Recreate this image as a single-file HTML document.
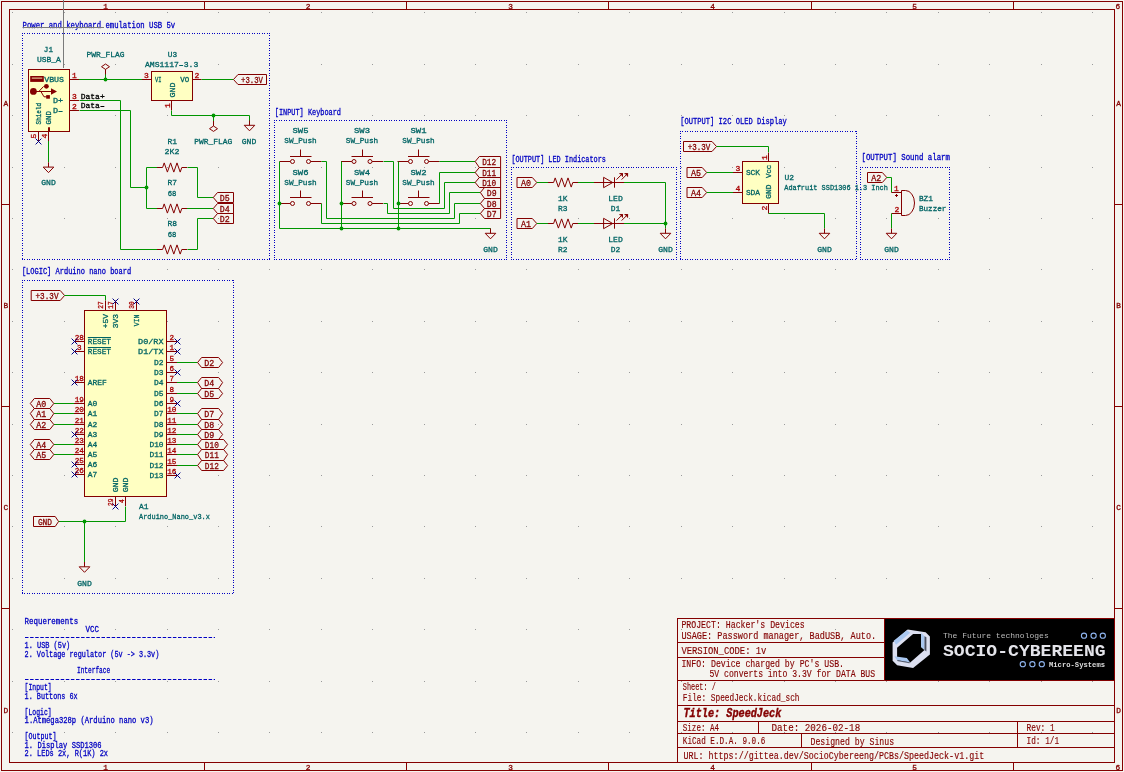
<!DOCTYPE html>
<html><head><meta charset="utf-8"><style>
html,body{margin:0;padding:0;background:#f5f4ef;}
svg{display:block;will-change:transform;}
text{font-family:"Liberation Mono", monospace;}
</style></head><body>
<svg width="1124" height="772" viewBox="0 0 1124 772">
<rect x="0" y="0" width="1124" height="772" fill="#f5f4ef"/>
<path d="M12,12h1v1h-1zM12,64h1v1h-1zM12,115h1v1h-1zM12,167h1v1h-1zM12,218h1v1h-1zM12,269h1v1h-1zM12,321h1v1h-1zM12,372h1v1h-1zM12,424h1v1h-1zM12,475h1v1h-1zM12,526h1v1h-1zM12,578h1v1h-1zM12,629h1v1h-1zM12,681h1v1h-1zM12,732h1v1h-1zM64,12h1v1h-1zM64,64h1v1h-1zM64,115h1v1h-1zM64,167h1v1h-1zM64,218h1v1h-1zM64,269h1v1h-1zM64,321h1v1h-1zM64,372h1v1h-1zM64,424h1v1h-1zM64,475h1v1h-1zM64,526h1v1h-1zM64,578h1v1h-1zM64,629h1v1h-1zM64,681h1v1h-1zM64,732h1v1h-1zM115,12h1v1h-1zM115,64h1v1h-1zM115,115h1v1h-1zM115,167h1v1h-1zM115,218h1v1h-1zM115,269h1v1h-1zM115,321h1v1h-1zM115,372h1v1h-1zM115,424h1v1h-1zM115,475h1v1h-1zM115,526h1v1h-1zM115,578h1v1h-1zM115,629h1v1h-1zM115,681h1v1h-1zM115,732h1v1h-1zM167,12h1v1h-1zM167,64h1v1h-1zM167,115h1v1h-1zM167,167h1v1h-1zM167,218h1v1h-1zM167,269h1v1h-1zM167,321h1v1h-1zM167,372h1v1h-1zM167,424h1v1h-1zM167,475h1v1h-1zM167,526h1v1h-1zM167,578h1v1h-1zM167,629h1v1h-1zM167,681h1v1h-1zM167,732h1v1h-1zM218,12h1v1h-1zM218,64h1v1h-1zM218,115h1v1h-1zM218,167h1v1h-1zM218,218h1v1h-1zM218,269h1v1h-1zM218,321h1v1h-1zM218,372h1v1h-1zM218,424h1v1h-1zM218,475h1v1h-1zM218,526h1v1h-1zM218,578h1v1h-1zM218,629h1v1h-1zM218,681h1v1h-1zM218,732h1v1h-1zM269,12h1v1h-1zM269,64h1v1h-1zM269,115h1v1h-1zM269,167h1v1h-1zM269,218h1v1h-1zM269,269h1v1h-1zM269,321h1v1h-1zM269,372h1v1h-1zM269,424h1v1h-1zM269,475h1v1h-1zM269,526h1v1h-1zM269,578h1v1h-1zM269,629h1v1h-1zM269,681h1v1h-1zM269,732h1v1h-1zM321,12h1v1h-1zM321,64h1v1h-1zM321,115h1v1h-1zM321,167h1v1h-1zM321,218h1v1h-1zM321,269h1v1h-1zM321,321h1v1h-1zM321,372h1v1h-1zM321,424h1v1h-1zM321,475h1v1h-1zM321,526h1v1h-1zM321,578h1v1h-1zM321,629h1v1h-1zM321,681h1v1h-1zM321,732h1v1h-1zM372,12h1v1h-1zM372,64h1v1h-1zM372,115h1v1h-1zM372,167h1v1h-1zM372,218h1v1h-1zM372,269h1v1h-1zM372,321h1v1h-1zM372,372h1v1h-1zM372,424h1v1h-1zM372,475h1v1h-1zM372,526h1v1h-1zM372,578h1v1h-1zM372,629h1v1h-1zM372,681h1v1h-1zM372,732h1v1h-1zM424,12h1v1h-1zM424,64h1v1h-1zM424,115h1v1h-1zM424,167h1v1h-1zM424,218h1v1h-1zM424,269h1v1h-1zM424,321h1v1h-1zM424,372h1v1h-1zM424,424h1v1h-1zM424,475h1v1h-1zM424,526h1v1h-1zM424,578h1v1h-1zM424,629h1v1h-1zM424,681h1v1h-1zM424,732h1v1h-1zM475,12h1v1h-1zM475,64h1v1h-1zM475,115h1v1h-1zM475,167h1v1h-1zM475,218h1v1h-1zM475,269h1v1h-1zM475,321h1v1h-1zM475,372h1v1h-1zM475,424h1v1h-1zM475,475h1v1h-1zM475,526h1v1h-1zM475,578h1v1h-1zM475,629h1v1h-1zM475,681h1v1h-1zM475,732h1v1h-1zM526,12h1v1h-1zM526,64h1v1h-1zM526,115h1v1h-1zM526,167h1v1h-1zM526,218h1v1h-1zM526,269h1v1h-1zM526,321h1v1h-1zM526,372h1v1h-1zM526,424h1v1h-1zM526,475h1v1h-1zM526,526h1v1h-1zM526,578h1v1h-1zM526,629h1v1h-1zM526,681h1v1h-1zM526,732h1v1h-1zM578,12h1v1h-1zM578,64h1v1h-1zM578,115h1v1h-1zM578,167h1v1h-1zM578,218h1v1h-1zM578,269h1v1h-1zM578,321h1v1h-1zM578,372h1v1h-1zM578,424h1v1h-1zM578,475h1v1h-1zM578,526h1v1h-1zM578,578h1v1h-1zM578,629h1v1h-1zM578,681h1v1h-1zM578,732h1v1h-1zM629,12h1v1h-1zM629,64h1v1h-1zM629,115h1v1h-1zM629,167h1v1h-1zM629,218h1v1h-1zM629,269h1v1h-1zM629,321h1v1h-1zM629,372h1v1h-1zM629,424h1v1h-1zM629,475h1v1h-1zM629,526h1v1h-1zM629,578h1v1h-1zM629,629h1v1h-1zM629,681h1v1h-1zM629,732h1v1h-1zM681,12h1v1h-1zM681,64h1v1h-1zM681,115h1v1h-1zM681,167h1v1h-1zM681,218h1v1h-1zM681,269h1v1h-1zM681,321h1v1h-1zM681,372h1v1h-1zM681,424h1v1h-1zM681,475h1v1h-1zM681,526h1v1h-1zM681,578h1v1h-1zM681,629h1v1h-1zM681,681h1v1h-1zM681,732h1v1h-1zM732,12h1v1h-1zM732,64h1v1h-1zM732,115h1v1h-1zM732,167h1v1h-1zM732,218h1v1h-1zM732,269h1v1h-1zM732,321h1v1h-1zM732,372h1v1h-1zM732,424h1v1h-1zM732,475h1v1h-1zM732,526h1v1h-1zM732,578h1v1h-1zM732,629h1v1h-1zM732,681h1v1h-1zM732,732h1v1h-1zM784,12h1v1h-1zM784,64h1v1h-1zM784,115h1v1h-1zM784,167h1v1h-1zM784,218h1v1h-1zM784,269h1v1h-1zM784,321h1v1h-1zM784,372h1v1h-1zM784,424h1v1h-1zM784,475h1v1h-1zM784,526h1v1h-1zM784,578h1v1h-1zM784,629h1v1h-1zM784,681h1v1h-1zM784,732h1v1h-1zM835,12h1v1h-1zM835,64h1v1h-1zM835,115h1v1h-1zM835,167h1v1h-1zM835,218h1v1h-1zM835,269h1v1h-1zM835,321h1v1h-1zM835,372h1v1h-1zM835,424h1v1h-1zM835,475h1v1h-1zM835,526h1v1h-1zM835,578h1v1h-1zM835,629h1v1h-1zM835,681h1v1h-1zM835,732h1v1h-1zM886,12h1v1h-1zM886,64h1v1h-1zM886,115h1v1h-1zM886,167h1v1h-1zM886,218h1v1h-1zM886,269h1v1h-1zM886,321h1v1h-1zM886,372h1v1h-1zM886,424h1v1h-1zM886,475h1v1h-1zM886,526h1v1h-1zM886,578h1v1h-1zM886,629h1v1h-1zM886,681h1v1h-1zM886,732h1v1h-1zM938,12h1v1h-1zM938,64h1v1h-1zM938,115h1v1h-1zM938,167h1v1h-1zM938,218h1v1h-1zM938,269h1v1h-1zM938,321h1v1h-1zM938,372h1v1h-1zM938,424h1v1h-1zM938,475h1v1h-1zM938,526h1v1h-1zM938,578h1v1h-1zM938,629h1v1h-1zM938,681h1v1h-1zM938,732h1v1h-1zM989,12h1v1h-1zM989,64h1v1h-1zM989,115h1v1h-1zM989,167h1v1h-1zM989,218h1v1h-1zM989,269h1v1h-1zM989,321h1v1h-1zM989,372h1v1h-1zM989,424h1v1h-1zM989,475h1v1h-1zM989,526h1v1h-1zM989,578h1v1h-1zM989,629h1v1h-1zM989,681h1v1h-1zM989,732h1v1h-1zM1041,12h1v1h-1zM1041,64h1v1h-1zM1041,115h1v1h-1zM1041,167h1v1h-1zM1041,218h1v1h-1zM1041,269h1v1h-1zM1041,321h1v1h-1zM1041,372h1v1h-1zM1041,424h1v1h-1zM1041,475h1v1h-1zM1041,526h1v1h-1zM1041,578h1v1h-1zM1041,629h1v1h-1zM1041,681h1v1h-1zM1041,732h1v1h-1zM1092,12h1v1h-1zM1092,64h1v1h-1zM1092,115h1v1h-1zM1092,167h1v1h-1zM1092,218h1v1h-1zM1092,269h1v1h-1zM1092,321h1v1h-1zM1092,372h1v1h-1zM1092,424h1v1h-1zM1092,475h1v1h-1zM1092,526h1v1h-1zM1092,578h1v1h-1zM1092,629h1v1h-1zM1092,681h1v1h-1zM1092,732h1v1h-1z" fill="#9a9a9a"/>
<rect x="1.5" y="1.5" width="1121" height="769" fill="none" stroke="#840000" stroke-width="1"/>
<rect x="9.5" y="9.5" width="1105" height="753" fill="none" stroke="#840000" stroke-width="1"/>
<line x1="204.50" y1="1.50" x2="204.50" y2="9.50" stroke="#840000" stroke-width="1" />
<line x1="204.50" y1="762.50" x2="204.50" y2="770.50" stroke="#840000" stroke-width="1" />
<line x1="406.50" y1="1.50" x2="406.50" y2="9.50" stroke="#840000" stroke-width="1" />
<line x1="406.50" y1="762.50" x2="406.50" y2="770.50" stroke="#840000" stroke-width="1" />
<line x1="608.50" y1="1.50" x2="608.50" y2="9.50" stroke="#840000" stroke-width="1" />
<line x1="608.50" y1="762.50" x2="608.50" y2="770.50" stroke="#840000" stroke-width="1" />
<line x1="811.50" y1="1.50" x2="811.50" y2="9.50" stroke="#840000" stroke-width="1" />
<line x1="811.50" y1="762.50" x2="811.50" y2="770.50" stroke="#840000" stroke-width="1" />
<line x1="1013.50" y1="1.50" x2="1013.50" y2="9.50" stroke="#840000" stroke-width="1" />
<line x1="1013.50" y1="762.50" x2="1013.50" y2="770.50" stroke="#840000" stroke-width="1" />
<line x1="1.50" y1="204.50" x2="9.50" y2="204.50" stroke="#840000" stroke-width="1" />
<line x1="1114.50" y1="204.50" x2="1122.50" y2="204.50" stroke="#840000" stroke-width="1" />
<line x1="1.50" y1="406.50" x2="9.50" y2="406.50" stroke="#840000" stroke-width="1" />
<line x1="1114.50" y1="406.50" x2="1122.50" y2="406.50" stroke="#840000" stroke-width="1" />
<line x1="1.50" y1="608.50" x2="9.50" y2="608.50" stroke="#840000" stroke-width="1" />
<line x1="1114.50" y1="608.50" x2="1122.50" y2="608.50" stroke="#840000" stroke-width="1" />
<text x="105.50" y="8.80" fill="#840000" font-size="7.8" text-anchor="middle" font-weight="normal" font-style="normal" font-family='"Liberation Mono", monospace' stroke="#840000" stroke-width="0.3" >1</text>
<text x="105.50" y="769.80" fill="#840000" font-size="7.8" text-anchor="middle" font-weight="normal" font-style="normal" font-family='"Liberation Mono", monospace' stroke="#840000" stroke-width="0.3" >1</text>
<text x="308.00" y="8.80" fill="#840000" font-size="7.8" text-anchor="middle" font-weight="normal" font-style="normal" font-family='"Liberation Mono", monospace' stroke="#840000" stroke-width="0.3" >2</text>
<text x="308.00" y="769.80" fill="#840000" font-size="7.8" text-anchor="middle" font-weight="normal" font-style="normal" font-family='"Liberation Mono", monospace' stroke="#840000" stroke-width="0.3" >2</text>
<text x="510.50" y="8.80" fill="#840000" font-size="7.8" text-anchor="middle" font-weight="normal" font-style="normal" font-family='"Liberation Mono", monospace' stroke="#840000" stroke-width="0.3" >3</text>
<text x="510.50" y="769.80" fill="#840000" font-size="7.8" text-anchor="middle" font-weight="normal" font-style="normal" font-family='"Liberation Mono", monospace' stroke="#840000" stroke-width="0.3" >3</text>
<text x="712.50" y="8.80" fill="#840000" font-size="7.8" text-anchor="middle" font-weight="normal" font-style="normal" font-family='"Liberation Mono", monospace' stroke="#840000" stroke-width="0.3" >4</text>
<text x="712.50" y="769.80" fill="#840000" font-size="7.8" text-anchor="middle" font-weight="normal" font-style="normal" font-family='"Liberation Mono", monospace' stroke="#840000" stroke-width="0.3" >4</text>
<text x="914.70" y="8.80" fill="#840000" font-size="7.8" text-anchor="middle" font-weight="normal" font-style="normal" font-family='"Liberation Mono", monospace' stroke="#840000" stroke-width="0.3" >5</text>
<text x="914.70" y="769.80" fill="#840000" font-size="7.8" text-anchor="middle" font-weight="normal" font-style="normal" font-family='"Liberation Mono", monospace' stroke="#840000" stroke-width="0.3" >5</text>
<text x="1117.90" y="8.80" fill="#840000" font-size="7.8" text-anchor="middle" font-weight="normal" font-style="normal" font-family='"Liberation Mono", monospace' stroke="#840000" stroke-width="0.3" >6</text>
<text x="1117.90" y="769.80" fill="#840000" font-size="7.8" text-anchor="middle" font-weight="normal" font-style="normal" font-family='"Liberation Mono", monospace' stroke="#840000" stroke-width="0.3" >6</text>
<text x="5.80" y="105.70" fill="#840000" font-size="7.8" text-anchor="middle" font-weight="normal" font-style="normal" font-family='"Liberation Mono", monospace' stroke="#840000" stroke-width="0.3" >A</text>
<text x="1118.50" y="105.70" fill="#840000" font-size="7.8" text-anchor="middle" font-weight="normal" font-style="normal" font-family='"Liberation Mono", monospace' stroke="#840000" stroke-width="0.3" >A</text>
<text x="5.80" y="307.90" fill="#840000" font-size="7.8" text-anchor="middle" font-weight="normal" font-style="normal" font-family='"Liberation Mono", monospace' stroke="#840000" stroke-width="0.3" >B</text>
<text x="1118.50" y="307.90" fill="#840000" font-size="7.8" text-anchor="middle" font-weight="normal" font-style="normal" font-family='"Liberation Mono", monospace' stroke="#840000" stroke-width="0.3" >B</text>
<text x="5.80" y="510.40" fill="#840000" font-size="7.8" text-anchor="middle" font-weight="normal" font-style="normal" font-family='"Liberation Mono", monospace' stroke="#840000" stroke-width="0.3" >C</text>
<text x="1118.50" y="510.40" fill="#840000" font-size="7.8" text-anchor="middle" font-weight="normal" font-style="normal" font-family='"Liberation Mono", monospace' stroke="#840000" stroke-width="0.3" >C</text>
<text x="5.80" y="712.80" fill="#840000" font-size="7.8" text-anchor="middle" font-weight="normal" font-style="normal" font-family='"Liberation Mono", monospace' stroke="#840000" stroke-width="0.3" >D</text>
<text x="1118.50" y="712.80" fill="#840000" font-size="7.8" text-anchor="middle" font-weight="normal" font-style="normal" font-family='"Liberation Mono", monospace' stroke="#840000" stroke-width="0.3" >D</text>
<text x="22.60" y="27.90" fill="#0000c2" font-size="8.8" text-anchor="start" font-weight="normal" font-style="normal" font-family='"Liberation Mono", monospace' textLength="152.60" lengthAdjust="spacingAndGlyphs" stroke="#0000c2" stroke-width="0.3" >Power and keyboard emulation USB 5v</text>
<path d="M22,33.5H270M22,259.5H270M22.5,33V260M269.5,33V260" fill="none" stroke="#0000c2" stroke-width="1" stroke-dasharray="1 1 1 2"/>
<text x="48.40" y="51.70" fill="#006464" font-size="8.0" text-anchor="middle" font-weight="normal" font-style="normal" font-family='"Liberation Mono", monospace' textLength="9.10" lengthAdjust="spacingAndGlyphs" stroke="#006464" stroke-width="0.3" >J1</text>
<text x="48.90" y="62.00" fill="#006464" font-size="8.0" text-anchor="middle" font-weight="normal" font-style="normal" font-family='"Liberation Mono", monospace' textLength="24.00" lengthAdjust="spacingAndGlyphs" stroke="#006464" stroke-width="0.3" >USB_A</text>
<rect x="28.5" y="69.5" width="41" height="62" fill="#ffffc2" stroke="#840000" stroke-width="1"/>
<rect x="30.2" y="76" width="13.6" height="5.9" fill="#840000"/>
<line x1="31.8" y1="78.1" x2="42.3" y2="78.1" stroke="#ffffc2" stroke-width="0.9"/>
<circle cx="33.4" cy="91.4" r="3.4" fill="#840000"/>
<path d="M33.4,91.5H52M38.8,91.5L43.6,86.4M40.9,91.5L44,96.8H47" stroke="#840000" stroke-width="1" fill="none"/>
<polygon points="51,88.2 57,91.5 51,94.8" fill="#840000"/>
<circle cx="46.4" cy="86.3" r="2.4" fill="#840000"/>
<rect x="46.2" y="95.1" width="3.7" height="3.6" fill="#840000"/>
<line x1="49" y1="127.3" x2="49" y2="131.5" stroke="#840000" stroke-width="2"/>
<text x="64.00" y="81.70" fill="#006464" font-size="8.0" text-anchor="end" font-weight="normal" font-style="normal" font-family='"Liberation Mono", monospace' textLength="19.80" lengthAdjust="spacingAndGlyphs" stroke="#006464" stroke-width="0.3" >VBUS</text>
<text x="63.00" y="102.70" fill="#006464" font-size="8.0" text-anchor="end" font-weight="normal" font-style="normal" font-family='"Liberation Mono", monospace' textLength="10.10" lengthAdjust="spacingAndGlyphs" stroke="#006464" stroke-width="0.3" >D+</text>
<text x="63.00" y="112.60" fill="#006464" font-size="8.0" text-anchor="end" font-weight="normal" font-style="normal" font-family='"Liberation Mono", monospace' textLength="10.10" lengthAdjust="spacingAndGlyphs" stroke="#006464" stroke-width="0.3" >D–</text>
<text x="40.90" y="124.40" fill="#006464" font-size="8.0" text-anchor="start" font-weight="normal" font-style="normal" font-family='"Liberation Mono", monospace' textLength="21.50" lengthAdjust="spacingAndGlyphs" transform="rotate(-90 40.90 124.40)" stroke="#006464" stroke-width="0.3" >Shield</text>
<text x="51.00" y="124.40" fill="#006464" font-size="8.0" text-anchor="start" font-weight="normal" font-style="normal" font-family='"Liberation Mono", monospace' textLength="13.50" lengthAdjust="spacingAndGlyphs" transform="rotate(-90 51.00 124.40)" stroke="#006464" stroke-width="0.3" >GND</text>
<line x1="69.50" y1="79.50" x2="79.00" y2="79.50" stroke="#840000" stroke-width="1" />
<text x="74.50" y="77.50" fill="#a90000" font-size="8.0" text-anchor="middle" font-weight="normal" font-style="normal" font-family='"Liberation Mono", monospace' stroke="#a90000" stroke-width="0.3" >1</text>
<line x1="69.50" y1="100.50" x2="79.00" y2="100.50" stroke="#840000" stroke-width="1" />
<text x="74.50" y="98.50" fill="#a90000" font-size="8.0" text-anchor="middle" font-weight="normal" font-style="normal" font-family='"Liberation Mono", monospace' stroke="#a90000" stroke-width="0.3" >3</text>
<line x1="69.50" y1="110.50" x2="79.00" y2="110.50" stroke="#840000" stroke-width="1" />
<text x="74.50" y="108.50" fill="#a90000" font-size="8.0" text-anchor="middle" font-weight="normal" font-style="normal" font-family='"Liberation Mono", monospace' stroke="#a90000" stroke-width="0.3" >2</text>
<line x1="38.50" y1="131.50" x2="38.50" y2="141.00" stroke="#840000" stroke-width="1" />
<text x="36.30" y="136.20" fill="#a90000" font-size="8.0" text-anchor="middle" font-weight="normal" font-style="normal" font-family='"Liberation Mono", monospace' transform="rotate(-90 36.30 136.20)" stroke="#a90000" stroke-width="0.3" >5</text>
<path d="M35.60,138.60L41.40,144.40M41.40,138.60L35.60,144.40" stroke="#000084" stroke-width="1" fill="none"/>
<line x1="48.50" y1="131.50" x2="48.50" y2="141.00" stroke="#840000" stroke-width="1" />
<text x="46.50" y="136.00" fill="#a90000" font-size="8.0" text-anchor="middle" font-weight="normal" font-style="normal" font-family='"Liberation Mono", monospace' transform="rotate(-90 46.50 136.00)" stroke="#a90000" stroke-width="0.3" >4</text>
<line x1="48.50" y1="141.00" x2="48.50" y2="162.30" stroke="#009600" stroke-width="1" />
<path d="M48.5,162.30V167.10M43.20,167.10H53.80L48.5,172.60Z" stroke="#840000" stroke-width="1" fill="none" stroke-linejoin="miter"/>
<text x="48.50" y="184.70" fill="#006464" font-size="8.0" text-anchor="middle" font-weight="normal" font-style="normal" font-family='"Liberation Mono", monospace' textLength="14.50" lengthAdjust="spacingAndGlyphs" stroke="#006464" stroke-width="0.3" >GND</text>
<text x="80.70" y="98.70" fill="#000000" font-size="8.0" text-anchor="start" font-weight="normal" font-style="normal" font-family='"Liberation Mono", monospace' textLength="24.00" lengthAdjust="spacingAndGlyphs" stroke="#000000" stroke-width="0.3" >Data+</text>
<text x="80.70" y="108.30" fill="#000000" font-size="8.0" text-anchor="start" font-weight="normal" font-style="normal" font-family='"Liberation Mono", monospace' textLength="24.00" lengthAdjust="spacingAndGlyphs" stroke="#000000" stroke-width="0.3" >Data–</text>
<line x1="79.00" y1="79.50" x2="142.00" y2="79.50" stroke="#009600" stroke-width="1" />
<line x1="105.50" y1="69.40" x2="105.50" y2="79.50" stroke="#009600" stroke-width="1" />
<circle cx="105.50" cy="79.50" r="1.9" fill="#009600"/>
<path d="M105.5,74.40V69.40M105.5,69.40L101.50,66.70L105.5,64.00L109.50,66.70Z" stroke="#840000" stroke-width="1" fill="none" stroke-linejoin="miter"/>
<text x="105.50" y="56.50" fill="#006464" font-size="8.0" text-anchor="middle" font-weight="normal" font-style="normal" font-family='"Liberation Mono", monospace' textLength="37.90" lengthAdjust="spacingAndGlyphs" stroke="#006464" stroke-width="0.3" >PWR_FLAG</text>
<text x="172.40" y="56.80" fill="#006464" font-size="8.0" text-anchor="middle" font-weight="normal" font-style="normal" font-family='"Liberation Mono", monospace' textLength="9.30" lengthAdjust="spacingAndGlyphs" stroke="#006464" stroke-width="0.3" >U3</text>
<text x="171.60" y="67.00" fill="#006464" font-size="8.0" text-anchor="middle" font-weight="normal" font-style="normal" font-family='"Liberation Mono", monospace' textLength="53.30" lengthAdjust="spacingAndGlyphs" stroke="#006464" stroke-width="0.3" >AMS1117–3.3</text>
<rect x="151.5" y="71.5" width="41" height="29" fill="#ffffc2" stroke="#840000" stroke-width="1"/>
<line x1="142.00" y1="79.50" x2="151.50" y2="79.50" stroke="#840000" stroke-width="1" />
<text x="146.50" y="77.50" fill="#a90000" font-size="8.0" text-anchor="middle" font-weight="normal" font-style="normal" font-family='"Liberation Mono", monospace' stroke="#a90000" stroke-width="0.3" >3</text>
<line x1="192.50" y1="79.50" x2="201.60" y2="79.50" stroke="#840000" stroke-width="1" />
<text x="197.00" y="77.50" fill="#a90000" font-size="8.0" text-anchor="middle" font-weight="normal" font-style="normal" font-family='"Liberation Mono", monospace' stroke="#a90000" stroke-width="0.3" >2</text>
<text x="155.00" y="81.70" fill="#006464" font-size="8.0" text-anchor="start" font-weight="normal" font-style="normal" font-family='"Liberation Mono", monospace' textLength="6.50" lengthAdjust="spacingAndGlyphs" stroke="#006464" stroke-width="0.3" >VI</text>
<text x="189.30" y="81.70" fill="#006464" font-size="8.0" text-anchor="end" font-weight="normal" font-style="normal" font-family='"Liberation Mono", monospace' textLength="9.00" lengthAdjust="spacingAndGlyphs" stroke="#006464" stroke-width="0.3" >VO</text>
<text x="174.50" y="97.50" fill="#006464" font-size="8.0" text-anchor="start" font-weight="normal" font-style="normal" font-family='"Liberation Mono", monospace' textLength="15.00" lengthAdjust="spacingAndGlyphs" transform="rotate(-90 174.50 97.50)" stroke="#006464" stroke-width="0.3" >GND</text>
<line x1="171.50" y1="100.50" x2="171.50" y2="110.40" stroke="#840000" stroke-width="1" />
<text x="169.50" y="105.50" fill="#a90000" font-size="8.0" text-anchor="middle" font-weight="normal" font-style="normal" font-family='"Liberation Mono", monospace' transform="rotate(-90 169.50 105.50)" stroke="#a90000" stroke-width="0.3" >1</text>
<line x1="201.60" y1="79.50" x2="233.40" y2="79.50" stroke="#009600" stroke-width="1" />
<polygon points="233.5,79.5 238,74.5 266.5,74.5 266.5,84.5 238,84.5" stroke="#840000" stroke-width="1" fill="none"/>
<text x="252.00" y="82.80" fill="#840000" font-size="9" text-anchor="middle" font-weight="normal" font-style="normal" font-family='"Liberation Mono", monospace' textLength="21.80" lengthAdjust="spacingAndGlyphs" stroke="#840000" stroke-width="0.3" >+3.3V</text>
<polyline points="171.50,110.50 171.50,115.50 249.50,115.50" stroke="#009600" stroke-width="1" fill="none" stroke-linejoin="miter" />
<circle cx="213.50" cy="115.50" r="1.9" fill="#009600"/>
<line x1="213.50" y1="115.50" x2="213.50" y2="121.00" stroke="#009600" stroke-width="1" />
<path d="M213.5,121.00V126.00M213.5,126.00L209.50,128.70L213.5,131.40L217.50,128.70Z" stroke="#840000" stroke-width="1" fill="none" stroke-linejoin="miter"/>
<line x1="249.50" y1="115.50" x2="249.50" y2="121.00" stroke="#009600" stroke-width="1" />
<path d="M249.5,120.50V125.30M244.20,125.30H254.80L249.5,130.80Z" stroke="#840000" stroke-width="1" fill="none" stroke-linejoin="miter"/>
<text x="213.30" y="144.00" fill="#006464" font-size="8.0" text-anchor="middle" font-weight="normal" font-style="normal" font-family='"Liberation Mono", monospace' textLength="37.90" lengthAdjust="spacingAndGlyphs" stroke="#006464" stroke-width="0.3" >PWR_FLAG</text>
<text x="249.00" y="144.00" fill="#006464" font-size="8.0" text-anchor="middle" font-weight="normal" font-style="normal" font-family='"Liberation Mono", monospace' textLength="14.50" lengthAdjust="spacingAndGlyphs" stroke="#006464" stroke-width="0.3" >GND</text>
<polyline points="79.50,100.50 120.50,100.50 120.50,249.50 157.50,249.50" stroke="#009600" stroke-width="1" fill="none" stroke-linejoin="miter" />
<polyline points="79.50,110.50 130.50,110.50 130.50,187.50 146.50,187.50" stroke="#009600" stroke-width="1" fill="none" stroke-linejoin="miter" />
<polyline points="157.50,167.50 146.50,167.50 146.50,208.50 157.50,208.50" stroke="#009600" stroke-width="1" fill="none" stroke-linejoin="miter" />
<circle cx="146.50" cy="187.50" r="1.9" fill="#009600"/>
<polyline points="157.00,167.50 162.60,167.50 164.20,162.90 167.40,172.10 170.60,162.90 173.80,172.10 177.00,162.90 180.20,172.10 181.80,167.50 187.20,167.50" stroke="#840000" stroke-width="1" fill="none" stroke-linejoin="miter"/>
<polyline points="157.00,208.50 162.60,208.50 164.20,203.90 167.40,213.10 170.60,203.90 173.80,213.10 177.00,203.90 180.20,213.10 181.80,208.50 187.20,208.50" stroke="#840000" stroke-width="1" fill="none" stroke-linejoin="miter"/>
<polyline points="157.00,249.50 162.60,249.50 164.20,244.90 167.40,254.10 170.60,244.90 173.80,254.10 177.00,244.90 180.20,254.10 181.80,249.50 187.20,249.50" stroke="#840000" stroke-width="1" fill="none" stroke-linejoin="miter"/>
<polyline points="187.50,167.50 197.50,167.50 197.50,197.50 213.50,197.50" stroke="#009600" stroke-width="1" fill="none" stroke-linejoin="miter" />
<line x1="187.00" y1="208.50" x2="213.30" y2="208.50" stroke="#009600" stroke-width="1" />
<polyline points="187.50,249.50 197.50,249.50 197.50,218.50 213.50,218.50" stroke="#009600" stroke-width="1" fill="none" stroke-linejoin="miter" />
<text x="172.20" y="144.00" fill="#006464" font-size="8.0" text-anchor="middle" font-weight="normal" font-style="normal" font-family='"Liberation Mono", monospace' textLength="9.50" lengthAdjust="spacingAndGlyphs" stroke="#006464" stroke-width="0.3" >R1</text>
<text x="172.00" y="154.00" fill="#006464" font-size="8.0" text-anchor="middle" font-weight="normal" font-style="normal" font-family='"Liberation Mono", monospace' textLength="14.80" lengthAdjust="spacingAndGlyphs" stroke="#006464" stroke-width="0.3" >2K2</text>
<text x="172.20" y="185.00" fill="#006464" font-size="8.0" text-anchor="middle" font-weight="normal" font-style="normal" font-family='"Liberation Mono", monospace' textLength="9.50" lengthAdjust="spacingAndGlyphs" stroke="#006464" stroke-width="0.3" >R7</text>
<text x="172.00" y="195.70" fill="#006464" font-size="8.0" text-anchor="middle" font-weight="normal" font-style="normal" font-family='"Liberation Mono", monospace' textLength="8.70" lengthAdjust="spacingAndGlyphs" stroke="#006464" stroke-width="0.3" >68</text>
<text x="172.20" y="225.70" fill="#006464" font-size="8.0" text-anchor="middle" font-weight="normal" font-style="normal" font-family='"Liberation Mono", monospace' textLength="9.50" lengthAdjust="spacingAndGlyphs" stroke="#006464" stroke-width="0.3" >R8</text>
<text x="172.00" y="236.60" fill="#006464" font-size="8.0" text-anchor="middle" font-weight="normal" font-style="normal" font-family='"Liberation Mono", monospace' textLength="8.70" lengthAdjust="spacingAndGlyphs" stroke="#006464" stroke-width="0.3" >68</text>
<polygon points="213.30,197.5 217.50,192.50 233.50,192.50 233.50,202.50 217.50,202.50" stroke="#840000" stroke-width="1" fill="none"/>
<text x="224.70" y="200.70" fill="#840000" font-size="9" text-anchor="middle" font-weight="normal" font-style="normal" font-family='"Liberation Mono", monospace' textLength="10.00" lengthAdjust="spacingAndGlyphs" stroke="#840000" stroke-width="0.3" >D5</text>
<polygon points="213.30,208.5 217.50,203.50 233.50,203.50 233.50,213.50 217.50,213.50" stroke="#840000" stroke-width="1" fill="none"/>
<text x="224.70" y="211.70" fill="#840000" font-size="9" text-anchor="middle" font-weight="normal" font-style="normal" font-family='"Liberation Mono", monospace' textLength="10.00" lengthAdjust="spacingAndGlyphs" stroke="#840000" stroke-width="0.3" >D4</text>
<polygon points="213.30,218.5 217.50,213.50 233.50,213.50 233.50,223.50 217.50,223.50" stroke="#840000" stroke-width="1" fill="none"/>
<text x="224.70" y="221.70" fill="#840000" font-size="9" text-anchor="middle" font-weight="normal" font-style="normal" font-family='"Liberation Mono", monospace' textLength="10.00" lengthAdjust="spacingAndGlyphs" stroke="#840000" stroke-width="0.3" >D2</text>
<path d="M63.5,0V68M22.6,27.5H104" stroke="#7a7a7a" stroke-width="1" fill="none"/>
<text x="274.80" y="114.90" fill="#0000c2" font-size="8.8" text-anchor="start" font-weight="normal" font-style="normal" font-family='"Liberation Mono", monospace' textLength="66.20" lengthAdjust="spacingAndGlyphs" stroke="#0000c2" stroke-width="0.3" >[INPUT] Keyboard</text>
<path d="M274,120.5H507M274,259.5H507M274.5,120V260M506.5,120V260" fill="none" stroke="#0000c2" stroke-width="1" stroke-dasharray="1 1 1 2"/>
<path d="M279.50,161.5H290.40M310.60,161.5H321.50M290.00,156.50H311.50M300.50,156.50V149.50" stroke="#840000" stroke-width="1" fill="none"/>
<circle cx="292.50" cy="161.5" r="2.0" stroke="#840000" stroke-width="1" fill="none"/>
<circle cx="308.50" cy="161.5" r="2.0" stroke="#840000" stroke-width="1" fill="none"/>
<text x="300.50" y="132.90" fill="#006464" font-size="8.0" text-anchor="middle" font-weight="normal" font-style="normal" font-family='"Liberation Mono", monospace' textLength="16.00" lengthAdjust="spacingAndGlyphs" stroke="#006464" stroke-width="0.3" >SW5</text>
<text x="300.50" y="142.90" fill="#006464" font-size="8.0" text-anchor="middle" font-weight="normal" font-style="normal" font-family='"Liberation Mono", monospace' textLength="32.50" lengthAdjust="spacingAndGlyphs" stroke="#006464" stroke-width="0.3" >SW_Push</text>
<path d="M341.00,161.5H351.90M372.10,161.5H383.00M351.50,156.50H373.00M362.50,156.50V149.50" stroke="#840000" stroke-width="1" fill="none"/>
<circle cx="354.00" cy="161.5" r="2.0" stroke="#840000" stroke-width="1" fill="none"/>
<circle cx="370.00" cy="161.5" r="2.0" stroke="#840000" stroke-width="1" fill="none"/>
<text x="362.00" y="132.90" fill="#006464" font-size="8.0" text-anchor="middle" font-weight="normal" font-style="normal" font-family='"Liberation Mono", monospace' textLength="16.00" lengthAdjust="spacingAndGlyphs" stroke="#006464" stroke-width="0.3" >SW3</text>
<text x="362.00" y="142.90" fill="#006464" font-size="8.0" text-anchor="middle" font-weight="normal" font-style="normal" font-family='"Liberation Mono", monospace' textLength="32.50" lengthAdjust="spacingAndGlyphs" stroke="#006464" stroke-width="0.3" >SW_Push</text>
<path d="M397.50,161.5H408.40M428.60,161.5H439.50M408.00,156.50H429.50M418.50,156.50V149.50" stroke="#840000" stroke-width="1" fill="none"/>
<circle cx="410.50" cy="161.5" r="2.0" stroke="#840000" stroke-width="1" fill="none"/>
<circle cx="426.50" cy="161.5" r="2.0" stroke="#840000" stroke-width="1" fill="none"/>
<text x="418.50" y="132.90" fill="#006464" font-size="8.0" text-anchor="middle" font-weight="normal" font-style="normal" font-family='"Liberation Mono", monospace' textLength="16.00" lengthAdjust="spacingAndGlyphs" stroke="#006464" stroke-width="0.3" >SW1</text>
<text x="418.50" y="142.90" fill="#006464" font-size="8.0" text-anchor="middle" font-weight="normal" font-style="normal" font-family='"Liberation Mono", monospace' textLength="32.50" lengthAdjust="spacingAndGlyphs" stroke="#006464" stroke-width="0.3" >SW_Push</text>
<path d="M279.50,203.5H290.40M310.60,203.5H321.50M290.00,197.50H311.50M300.50,197.50V190.50" stroke="#840000" stroke-width="1" fill="none"/>
<circle cx="292.50" cy="203.5" r="2.0" stroke="#840000" stroke-width="1" fill="none"/>
<circle cx="308.50" cy="203.5" r="2.0" stroke="#840000" stroke-width="1" fill="none"/>
<text x="300.50" y="174.90" fill="#006464" font-size="8.0" text-anchor="middle" font-weight="normal" font-style="normal" font-family='"Liberation Mono", monospace' textLength="16.00" lengthAdjust="spacingAndGlyphs" stroke="#006464" stroke-width="0.3" >SW6</text>
<text x="300.50" y="184.90" fill="#006464" font-size="8.0" text-anchor="middle" font-weight="normal" font-style="normal" font-family='"Liberation Mono", monospace' textLength="32.50" lengthAdjust="spacingAndGlyphs" stroke="#006464" stroke-width="0.3" >SW_Push</text>
<path d="M341.00,203.5H351.90M372.10,203.5H383.00M351.50,197.50H373.00M362.50,197.50V190.50" stroke="#840000" stroke-width="1" fill="none"/>
<circle cx="354.00" cy="203.5" r="2.0" stroke="#840000" stroke-width="1" fill="none"/>
<circle cx="370.00" cy="203.5" r="2.0" stroke="#840000" stroke-width="1" fill="none"/>
<text x="362.00" y="174.90" fill="#006464" font-size="8.0" text-anchor="middle" font-weight="normal" font-style="normal" font-family='"Liberation Mono", monospace' textLength="16.00" lengthAdjust="spacingAndGlyphs" stroke="#006464" stroke-width="0.3" >SW4</text>
<text x="362.00" y="184.90" fill="#006464" font-size="8.0" text-anchor="middle" font-weight="normal" font-style="normal" font-family='"Liberation Mono", monospace' textLength="32.50" lengthAdjust="spacingAndGlyphs" stroke="#006464" stroke-width="0.3" >SW_Push</text>
<path d="M397.50,203.5H408.40M428.60,203.5H439.50M408.00,197.50H429.50M418.50,197.50V190.50" stroke="#840000" stroke-width="1" fill="none"/>
<circle cx="410.50" cy="203.5" r="2.0" stroke="#840000" stroke-width="1" fill="none"/>
<circle cx="426.50" cy="203.5" r="2.0" stroke="#840000" stroke-width="1" fill="none"/>
<text x="418.50" y="174.90" fill="#006464" font-size="8.0" text-anchor="middle" font-weight="normal" font-style="normal" font-family='"Liberation Mono", monospace' textLength="16.00" lengthAdjust="spacingAndGlyphs" stroke="#006464" stroke-width="0.3" >SW2</text>
<text x="418.50" y="184.90" fill="#006464" font-size="8.0" text-anchor="middle" font-weight="normal" font-style="normal" font-family='"Liberation Mono", monospace' textLength="32.50" lengthAdjust="spacingAndGlyphs" stroke="#006464" stroke-width="0.3" >SW_Push</text>
<polyline points="279.50,161.50 279.50,228.50 490.50,228.50 490.50,229.50" stroke="#009600" stroke-width="1" fill="none" stroke-linejoin="miter" />
<line x1="341.50" y1="161.50" x2="341.50" y2="228.50" stroke="#009600" stroke-width="1" />
<line x1="398.50" y1="161.50" x2="398.50" y2="228.50" stroke="#009600" stroke-width="1" />
<circle cx="279.50" cy="203.50" r="1.9" fill="#009600"/>
<circle cx="341.50" cy="203.50" r="1.9" fill="#009600"/>
<circle cx="398.50" cy="203.50" r="1.9" fill="#009600"/>
<circle cx="341.50" cy="228.50" r="1.9" fill="#009600"/>
<circle cx="398.50" cy="228.50" r="1.9" fill="#009600"/>
<polyline points="321.50,161.50 326.50,161.50 326.50,218.50 454.50,218.50 454.50,203.50 480.50,203.50" stroke="#009600" stroke-width="1" fill="none" stroke-linejoin="miter" />
<polyline points="321.50,203.50 321.50,223.50 459.50,223.50 459.50,213.50 480.50,213.50" stroke="#009600" stroke-width="1" fill="none" stroke-linejoin="miter" />
<polyline points="383.50,161.50 393.50,161.50 393.50,208.50 444.50,208.50 444.50,182.50 475.50,182.50" stroke="#009600" stroke-width="1" fill="none" stroke-linejoin="miter" />
<polyline points="383.50,203.50 387.50,203.50 387.50,213.50 449.50,213.50 449.50,192.50 480.50,192.50" stroke="#009600" stroke-width="1" fill="none" stroke-linejoin="miter" />
<line x1="439.40" y1="161.50" x2="475.20" y2="161.50" stroke="#009600" stroke-width="1" />
<polyline points="439.50,203.50 439.50,172.50 475.50,172.50" stroke="#009600" stroke-width="1" fill="none" stroke-linejoin="miter" />
<polygon points="475.20,161.5 479.30,156.50 500.60,156.50 500.60,167.50 479.30,167.50" stroke="#840000" stroke-width="1" fill="none"/>
<text x="489.15" y="164.70" fill="#840000" font-size="9" text-anchor="middle" font-weight="normal" font-style="normal" font-family='"Liberation Mono", monospace' textLength="14.00" lengthAdjust="spacingAndGlyphs" stroke="#840000" stroke-width="0.3" >D12</text>
<polygon points="475.20,172.5 479.30,167.50 500.60,167.50 500.60,177.50 479.30,177.50" stroke="#840000" stroke-width="1" fill="none"/>
<text x="489.15" y="175.70" fill="#840000" font-size="9" text-anchor="middle" font-weight="normal" font-style="normal" font-family='"Liberation Mono", monospace' textLength="14.00" lengthAdjust="spacingAndGlyphs" stroke="#840000" stroke-width="0.3" >D11</text>
<polygon points="475.20,182.5 479.30,177.50 500.60,177.50 500.60,187.50 479.30,187.50" stroke="#840000" stroke-width="1" fill="none"/>
<text x="489.15" y="185.70" fill="#840000" font-size="9" text-anchor="middle" font-weight="normal" font-style="normal" font-family='"Liberation Mono", monospace' textLength="14.00" lengthAdjust="spacingAndGlyphs" stroke="#840000" stroke-width="0.3" >D10</text>
<polygon points="480.40,192.5 484.50,187.50 500.60,187.50 500.60,198.50 484.50,198.50" stroke="#840000" stroke-width="1" fill="none"/>
<text x="491.75" y="195.70" fill="#840000" font-size="9" text-anchor="middle" font-weight="normal" font-style="normal" font-family='"Liberation Mono", monospace' textLength="9.80" lengthAdjust="spacingAndGlyphs" stroke="#840000" stroke-width="0.3" >D9</text>
<polygon points="480.40,203.5 484.50,198.50 500.60,198.50 500.60,208.50 484.50,208.50" stroke="#840000" stroke-width="1" fill="none"/>
<text x="491.75" y="206.70" fill="#840000" font-size="9" text-anchor="middle" font-weight="normal" font-style="normal" font-family='"Liberation Mono", monospace' textLength="9.80" lengthAdjust="spacingAndGlyphs" stroke="#840000" stroke-width="0.3" >D8</text>
<polygon points="480.40,213.5 484.50,208.50 500.60,208.50 500.60,218.50 484.50,218.50" stroke="#840000" stroke-width="1" fill="none"/>
<text x="491.75" y="216.70" fill="#840000" font-size="9" text-anchor="middle" font-weight="normal" font-style="normal" font-family='"Liberation Mono", monospace' textLength="9.80" lengthAdjust="spacingAndGlyphs" stroke="#840000" stroke-width="0.3" >D7</text>
<path d="M490.5,228.50V233.30M485.20,233.30H495.80L490.5,238.80Z" stroke="#840000" stroke-width="1" fill="none" stroke-linejoin="miter"/>
<text x="490.50" y="251.80" fill="#006464" font-size="8.0" text-anchor="middle" font-weight="normal" font-style="normal" font-family='"Liberation Mono", monospace' textLength="14.50" lengthAdjust="spacingAndGlyphs" stroke="#006464" stroke-width="0.3" >GND</text>
<text x="511.40" y="161.60" fill="#0000c2" font-size="8.8" text-anchor="start" font-weight="normal" font-style="normal" font-family='"Liberation Mono", monospace' textLength="94.50" lengthAdjust="spacingAndGlyphs" stroke="#0000c2" stroke-width="0.3" >[OUTPUT] LED Indicators</text>
<path d="M511,167.5H677M511,259.5H677M511.5,167V260M676.5,167V260" fill="none" stroke="#0000c2" stroke-width="1" stroke-dasharray="1 1 1 2"/>
<polygon points="517.00,177.50 532.30,177.50 536.80,182.5 532.30,187.50 517.00,187.50" stroke="#840000" stroke-width="1" fill="none"/>
<text x="525.95" y="185.70" fill="#840000" font-size="9" text-anchor="middle" font-weight="normal" font-style="normal" font-family='"Liberation Mono", monospace' textLength="10.00" lengthAdjust="spacingAndGlyphs" stroke="#840000" stroke-width="0.3" >A0</text>
<line x1="536.70" y1="182.50" x2="548.00" y2="182.50" stroke="#009600" stroke-width="1" />
<polyline points="548.00,182.50 553.60,182.50 555.20,177.90 558.40,187.10 561.60,177.90 564.80,187.10 568.00,177.90 571.20,187.10 572.80,182.50 578.20,182.50" stroke="#840000" stroke-width="1" fill="none" stroke-linejoin="miter"/>
<line x1="578.00" y1="182.50" x2="594.00" y2="182.50" stroke="#009600" stroke-width="1" />
<path d="M594.00,182.5H624.00M603.60,177.30V187.70L612.70,182.5Z M614.50,177.30V187.70" stroke="#840000" stroke-width="1" fill="none" stroke-linejoin="miter"/>
<path d="M616.50,179.60L622.50,173.60M619.40,173.60H622.50V176.60" stroke="#840000" stroke-width="1" fill="none"/>
<path d="M622.90,173.20L619.70,173.60L622.50,176.40Z" fill="#840000"/>
<path d="M621.60,179.60L627.60,173.60M624.50,173.60H627.60V176.60" stroke="#840000" stroke-width="1" fill="none"/>
<path d="M628.00,173.20L624.80,173.60L627.60,176.40Z" fill="#840000"/>
<line x1="624.00" y1="182.50" x2="665.50" y2="182.50" stroke="#009600" stroke-width="1" />
<text x="562.70" y="201.10" fill="#006464" font-size="8.0" text-anchor="middle" font-weight="normal" font-style="normal" font-family='"Liberation Mono", monospace' textLength="9.50" lengthAdjust="spacingAndGlyphs" stroke="#006464" stroke-width="0.3" >1K</text>
<text x="562.70" y="211.10" fill="#006464" font-size="8.0" text-anchor="middle" font-weight="normal" font-style="normal" font-family='"Liberation Mono", monospace' textLength="9.50" lengthAdjust="spacingAndGlyphs" stroke="#006464" stroke-width="0.3" >R3</text>
<text x="615.50" y="201.10" fill="#006464" font-size="8.0" text-anchor="middle" font-weight="normal" font-style="normal" font-family='"Liberation Mono", monospace' textLength="14.50" lengthAdjust="spacingAndGlyphs" stroke="#006464" stroke-width="0.3" >LED</text>
<text x="615.50" y="211.10" fill="#006464" font-size="8.0" text-anchor="middle" font-weight="normal" font-style="normal" font-family='"Liberation Mono", monospace' textLength="9.50" lengthAdjust="spacingAndGlyphs" stroke="#006464" stroke-width="0.3" >D1</text>
<polygon points="517.00,218.50 532.30,218.50 536.80,223.5 532.30,228.50 517.00,228.50" stroke="#840000" stroke-width="1" fill="none"/>
<text x="525.95" y="226.70" fill="#840000" font-size="9" text-anchor="middle" font-weight="normal" font-style="normal" font-family='"Liberation Mono", monospace' textLength="10.00" lengthAdjust="spacingAndGlyphs" stroke="#840000" stroke-width="0.3" >A1</text>
<line x1="536.70" y1="223.50" x2="548.00" y2="223.50" stroke="#009600" stroke-width="1" />
<polyline points="548.00,223.50 553.60,223.50 555.20,218.90 558.40,228.10 561.60,218.90 564.80,228.10 568.00,218.90 571.20,228.10 572.80,223.50 578.20,223.50" stroke="#840000" stroke-width="1" fill="none" stroke-linejoin="miter"/>
<line x1="578.00" y1="223.50" x2="594.00" y2="223.50" stroke="#009600" stroke-width="1" />
<path d="M594.00,223.5H624.00M603.60,218.30V228.70L612.70,223.5Z M614.50,218.30V228.70" stroke="#840000" stroke-width="1" fill="none" stroke-linejoin="miter"/>
<path d="M616.50,220.60L622.50,214.60M619.40,214.60H622.50V217.60" stroke="#840000" stroke-width="1" fill="none"/>
<path d="M622.90,214.20L619.70,214.60L622.50,217.40Z" fill="#840000"/>
<path d="M621.60,220.60L627.60,214.60M624.50,214.60H627.60V217.60" stroke="#840000" stroke-width="1" fill="none"/>
<path d="M628.00,214.20L624.80,214.60L627.60,217.40Z" fill="#840000"/>
<line x1="624.00" y1="223.50" x2="665.50" y2="223.50" stroke="#009600" stroke-width="1" />
<text x="562.70" y="242.10" fill="#006464" font-size="8.0" text-anchor="middle" font-weight="normal" font-style="normal" font-family='"Liberation Mono", monospace' textLength="9.50" lengthAdjust="spacingAndGlyphs" stroke="#006464" stroke-width="0.3" >1K</text>
<text x="562.70" y="252.10" fill="#006464" font-size="8.0" text-anchor="middle" font-weight="normal" font-style="normal" font-family='"Liberation Mono", monospace' textLength="9.50" lengthAdjust="spacingAndGlyphs" stroke="#006464" stroke-width="0.3" >R2</text>
<text x="615.50" y="242.10" fill="#006464" font-size="8.0" text-anchor="middle" font-weight="normal" font-style="normal" font-family='"Liberation Mono", monospace' textLength="14.50" lengthAdjust="spacingAndGlyphs" stroke="#006464" stroke-width="0.3" >LED</text>
<text x="615.50" y="252.10" fill="#006464" font-size="8.0" text-anchor="middle" font-weight="normal" font-style="normal" font-family='"Liberation Mono", monospace' textLength="9.50" lengthAdjust="spacingAndGlyphs" stroke="#006464" stroke-width="0.3" >D2</text>
<line x1="665.50" y1="182.50" x2="665.50" y2="228.50" stroke="#009600" stroke-width="1" />
<circle cx="665.50" cy="223.50" r="1.9" fill="#009600"/>
<path d="M665.5,228.50V233.30M660.20,233.30H670.80L665.5,238.80Z" stroke="#840000" stroke-width="1" fill="none" stroke-linejoin="miter"/>
<text x="665.50" y="252.00" fill="#006464" font-size="8.0" text-anchor="middle" font-weight="normal" font-style="normal" font-family='"Liberation Mono", monospace' textLength="14.50" lengthAdjust="spacingAndGlyphs" stroke="#006464" stroke-width="0.3" >GND</text>
<text x="680.20" y="123.80" fill="#0000c2" font-size="8.8" text-anchor="start" font-weight="normal" font-style="normal" font-family='"Liberation Mono", monospace' textLength="106.70" lengthAdjust="spacingAndGlyphs" stroke="#0000c2" stroke-width="0.3" >[OUTPUT] I2C OLED Display</text>
<path d="M680,131.5H857M680,259.5H857M680.5,131V260M856.5,131V260" fill="none" stroke="#0000c2" stroke-width="1" stroke-dasharray="1 1 1 2"/>
<polygon points="683.50,141.50 712.00,141.50 716.50,146.5 712.00,151.50 683.50,151.50" stroke="#840000" stroke-width="1" fill="none"/>
<text x="699.05" y="149.70" fill="#840000" font-size="9" text-anchor="middle" font-weight="normal" font-style="normal" font-family='"Liberation Mono", monospace' textLength="22.50" lengthAdjust="spacingAndGlyphs" stroke="#840000" stroke-width="0.3" >+3.3V</text>
<polyline points="716.50,146.50 768.50,146.50 768.50,152.50" stroke="#009600" stroke-width="1" fill="none" stroke-linejoin="miter" />
<line x1="768.50" y1="152.70" x2="768.50" y2="161.50" stroke="#840000" stroke-width="1" />
<rect x="742.5" y="161.5" width="36" height="42" fill="#ffffc2" stroke="#840000" stroke-width="1"/>
<text x="766.50" y="157.50" fill="#a90000" font-size="8.0" text-anchor="middle" font-weight="normal" font-style="normal" font-family='"Liberation Mono", monospace' transform="rotate(-90 766.50 157.50)" stroke="#a90000" stroke-width="0.3" >1</text>
<polygon points="687.00,167.50 702.20,167.50 706.70,172.5 702.20,177.50 687.00,177.50" stroke="#840000" stroke-width="1" fill="none"/>
<text x="695.90" y="175.70" fill="#840000" font-size="9" text-anchor="middle" font-weight="normal" font-style="normal" font-family='"Liberation Mono", monospace' textLength="10.00" lengthAdjust="spacingAndGlyphs" stroke="#840000" stroke-width="0.3" >A5</text>
<polygon points="687.00,187.50 702.20,187.50 706.70,192.5 702.20,197.50 687.00,197.50" stroke="#840000" stroke-width="1" fill="none"/>
<text x="695.90" y="195.70" fill="#840000" font-size="9" text-anchor="middle" font-weight="normal" font-style="normal" font-family='"Liberation Mono", monospace' textLength="10.00" lengthAdjust="spacingAndGlyphs" stroke="#840000" stroke-width="0.3" >A4</text>
<line x1="706.70" y1="172.50" x2="733.00" y2="172.50" stroke="#009600" stroke-width="1" />
<line x1="706.70" y1="192.50" x2="733.00" y2="192.50" stroke="#009600" stroke-width="1" />
<line x1="733.00" y1="172.50" x2="742.50" y2="172.50" stroke="#840000" stroke-width="1" />
<line x1="733.00" y1="192.50" x2="742.50" y2="192.50" stroke="#840000" stroke-width="1" />
<text x="737.80" y="170.50" fill="#a90000" font-size="8.0" text-anchor="middle" font-weight="normal" font-style="normal" font-family='"Liberation Mono", monospace' stroke="#a90000" stroke-width="0.3" >3</text>
<text x="737.80" y="190.50" fill="#a90000" font-size="8.0" text-anchor="middle" font-weight="normal" font-style="normal" font-family='"Liberation Mono", monospace' stroke="#a90000" stroke-width="0.3" >4</text>
<text x="745.90" y="174.80" fill="#006464" font-size="8.0" text-anchor="start" font-weight="normal" font-style="normal" font-family='"Liberation Mono", monospace' textLength="14.10" lengthAdjust="spacingAndGlyphs" stroke="#006464" stroke-width="0.3" >SCK</text>
<text x="745.90" y="194.80" fill="#006464" font-size="8.0" text-anchor="start" font-weight="normal" font-style="normal" font-family='"Liberation Mono", monospace' textLength="14.10" lengthAdjust="spacingAndGlyphs" stroke="#006464" stroke-width="0.3" >SDA</text>
<text x="771.30" y="178.00" fill="#006464" font-size="8.0" text-anchor="start" font-weight="normal" font-style="normal" font-family='"Liberation Mono", monospace' textLength="13.30" lengthAdjust="spacingAndGlyphs" transform="rotate(-90 771.30 178.00)" stroke="#006464" stroke-width="0.3" >Vcc</text>
<text x="771.30" y="198.70" fill="#006464" font-size="8.0" text-anchor="start" font-weight="normal" font-style="normal" font-family='"Liberation Mono", monospace' textLength="14.00" lengthAdjust="spacingAndGlyphs" transform="rotate(-90 771.30 198.70)" stroke="#006464" stroke-width="0.3" >GND</text>
<line x1="768.50" y1="203.50" x2="768.50" y2="213.50" stroke="#840000" stroke-width="1" />
<text x="766.50" y="208.00" fill="#a90000" font-size="8.0" text-anchor="middle" font-weight="normal" font-style="normal" font-family='"Liberation Mono", monospace' transform="rotate(-90 766.50 208.00)" stroke="#a90000" stroke-width="0.3" >2</text>
<polyline points="768.50,213.50 824.50,213.50 824.50,228.50" stroke="#009600" stroke-width="1" fill="none" stroke-linejoin="miter" />
<path d="M824.5,228.50V233.30M819.20,233.30H829.80L824.5,238.80Z" stroke="#840000" stroke-width="1" fill="none" stroke-linejoin="miter"/>
<text x="824.50" y="252.00" fill="#006464" font-size="8.0" text-anchor="middle" font-weight="normal" font-style="normal" font-family='"Liberation Mono", monospace' textLength="14.50" lengthAdjust="spacingAndGlyphs" stroke="#006464" stroke-width="0.3" >GND</text>
<text x="784.40" y="180.20" fill="#006464" font-size="8.0" text-anchor="start" font-weight="normal" font-style="normal" font-family='"Liberation Mono", monospace' textLength="9.50" lengthAdjust="spacingAndGlyphs" stroke="#006464" stroke-width="0.3" >U2</text>
<text x="784.30" y="189.80" fill="#006464" font-size="8.0" text-anchor="start" font-weight="normal" font-style="normal" font-family='"Liberation Mono", monospace' textLength="103.60" lengthAdjust="spacingAndGlyphs" stroke="#006464" stroke-width="0.3" >Adafruit SSD1306 1.3 Inch</text>
<text x="861.50" y="159.80" fill="#0000c2" font-size="8.8" text-anchor="start" font-weight="normal" font-style="normal" font-family='"Liberation Mono", monospace' textLength="88.40" lengthAdjust="spacingAndGlyphs" stroke="#0000c2" stroke-width="0.3" >[OUTPUT] Sound alarm</text>
<path d="M860,167.5H950M860,259.5H950M860.5,167V260M949.5,167V260" fill="none" stroke="#0000c2" stroke-width="1" stroke-dasharray="1 1 1 2"/>
<polygon points="867.50,172.50 882.30,172.50 886.80,177.5 882.30,182.50 867.50,182.50" stroke="#840000" stroke-width="1" fill="none"/>
<text x="876.20" y="180.70" fill="#840000" font-size="9" text-anchor="middle" font-weight="normal" font-style="normal" font-family='"Liberation Mono", monospace' textLength="10.00" lengthAdjust="spacingAndGlyphs" stroke="#840000" stroke-width="0.3" >A2</text>
<polyline points="886.50,177.50 891.50,177.50 891.50,192.50" stroke="#009600" stroke-width="1" fill="none" stroke-linejoin="miter" />
<line x1="891.50" y1="192.50" x2="901.50" y2="192.50" stroke="#840000" stroke-width="1" />
<line x1="891.50" y1="213.50" x2="901.50" y2="213.50" stroke="#840000" stroke-width="1" />
<path d="M901.5,190.5H905.5A9 12.5 0 0 1 905.5,215.5H901.5Z" stroke="#840000" stroke-width="1" fill="none"/>
<text x="896.50" y="191.20" fill="#a90000" font-size="8.0" text-anchor="middle" font-weight="normal" font-style="normal" font-family='"Liberation Mono", monospace' stroke="#a90000" stroke-width="0.3" >1</text>
<text x="896.90" y="211.60" fill="#a90000" font-size="8.0" text-anchor="middle" font-weight="normal" font-style="normal" font-family='"Liberation Mono", monospace' stroke="#a90000" stroke-width="0.3" >2</text>
<path d="M895,195.5H898M896.5,194V197" stroke="#840000" stroke-width="1"/>
<line x1="891.50" y1="213.50" x2="891.50" y2="228.50" stroke="#009600" stroke-width="1" />
<path d="M891.5,228.50V233.30M886.20,233.30H896.80L891.5,238.80Z" stroke="#840000" stroke-width="1" fill="none" stroke-linejoin="miter"/>
<text x="891.50" y="252.00" fill="#006464" font-size="8.0" text-anchor="middle" font-weight="normal" font-style="normal" font-family='"Liberation Mono", monospace' textLength="14.50" lengthAdjust="spacingAndGlyphs" stroke="#006464" stroke-width="0.3" >GND</text>
<text x="918.90" y="201.00" fill="#006464" font-size="8.0" text-anchor="start" font-weight="normal" font-style="normal" font-family='"Liberation Mono", monospace' textLength="14.00" lengthAdjust="spacingAndGlyphs" stroke="#006464" stroke-width="0.3" >BZ1</text>
<text x="918.90" y="211.00" fill="#006464" font-size="8.0" text-anchor="start" font-weight="normal" font-style="normal" font-family='"Liberation Mono", monospace' textLength="27.50" lengthAdjust="spacingAndGlyphs" stroke="#006464" stroke-width="0.3" >Buzzer</text>
<text x="21.90" y="273.80" fill="#0000c2" font-size="8.8" text-anchor="start" font-weight="normal" font-style="normal" font-family='"Liberation Mono", monospace' textLength="109.30" lengthAdjust="spacingAndGlyphs" stroke="#0000c2" stroke-width="0.3" >[LOGIC] Arduino nano board</text>
<path d="M22,280.5H234M22,593.5H234M22.5,280V594M233.5,280V594" fill="none" stroke="#0000c2" stroke-width="1" stroke-dasharray="1 1 1 2"/>
<polygon points="31.20,290.50 60.20,290.50 64.60,295.5 60.20,300.50 31.20,300.50" stroke="#840000" stroke-width="1" fill="none"/>
<text x="47.00" y="298.70" fill="#840000" font-size="9" text-anchor="middle" font-weight="normal" font-style="normal" font-family='"Liberation Mono", monospace' textLength="23.00" lengthAdjust="spacingAndGlyphs" stroke="#840000" stroke-width="0.3" >+3.3V</text>
<polyline points="64.50,295.50 105.50,295.50 105.50,300.50" stroke="#009600" stroke-width="1" fill="none" stroke-linejoin="miter" />
<rect x="84.5" y="310.5" width="82" height="186" fill="#ffffc2" stroke="#840000" stroke-width="1"/>
<line x1="105.50" y1="300.60" x2="105.50" y2="310.50" stroke="#840000" stroke-width="1" />
<text x="103.50" y="308.80" fill="#a90000" font-size="8.0" text-anchor="start" font-weight="normal" font-style="normal" font-family='"Liberation Mono", monospace' textLength="7.50" lengthAdjust="spacingAndGlyphs" transform="rotate(-90 103.50 308.80)" stroke="#a90000" stroke-width="0.3" >27</text>
<text x="108.30" y="328.30" fill="#006464" font-size="8.0" text-anchor="start" font-weight="normal" font-style="normal" font-family='"Liberation Mono", monospace' textLength="14.30" lengthAdjust="spacingAndGlyphs" transform="rotate(-90 108.30 328.30)" stroke="#006464" stroke-width="0.3" >+5V</text>
<line x1="115.50" y1="300.60" x2="115.50" y2="310.50" stroke="#840000" stroke-width="1" />
<text x="113.50" y="308.80" fill="#a90000" font-size="8.0" text-anchor="start" font-weight="normal" font-style="normal" font-family='"Liberation Mono", monospace' textLength="7.50" lengthAdjust="spacingAndGlyphs" transform="rotate(-90 113.50 308.80)" stroke="#a90000" stroke-width="0.3" >17</text>
<text x="118.30" y="328.30" fill="#006464" font-size="8.0" text-anchor="start" font-weight="normal" font-style="normal" font-family='"Liberation Mono", monospace' textLength="14.30" lengthAdjust="spacingAndGlyphs" transform="rotate(-90 118.30 328.30)" stroke="#006464" stroke-width="0.3" >3V3</text>
<line x1="136.50" y1="300.60" x2="136.50" y2="310.50" stroke="#840000" stroke-width="1" />
<text x="134.50" y="308.80" fill="#a90000" font-size="8.0" text-anchor="start" font-weight="normal" font-style="normal" font-family='"Liberation Mono", monospace' textLength="7.50" lengthAdjust="spacingAndGlyphs" transform="rotate(-90 134.50 308.80)" stroke="#a90000" stroke-width="0.3" >30</text>
<text x="139.30" y="326.20" fill="#006464" font-size="8.0" text-anchor="start" font-weight="normal" font-style="normal" font-family='"Liberation Mono", monospace' textLength="11.70" lengthAdjust="spacingAndGlyphs" transform="rotate(-90 139.30 326.20)" stroke="#006464" stroke-width="0.3" >VIN</text>
<path d="M112.60,298.60L118.40,304.40M118.40,298.60L112.60,304.40" stroke="#000084" stroke-width="1" fill="none"/>
<path d="M133.60,298.60L139.40,304.40M139.40,298.60L133.60,304.40" stroke="#000084" stroke-width="1" fill="none"/>
<line x1="74.00" y1="341.50" x2="84.50" y2="341.50" stroke="#840000" stroke-width="1" />
<text x="79.30" y="340.10" fill="#a90000" font-size="8.0" text-anchor="middle" font-weight="normal" font-style="normal" font-family='"Liberation Mono", monospace' textLength="9.20" lengthAdjust="spacingAndGlyphs" stroke="#a90000" stroke-width="0.3" >28</text>
<text x="87.80" y="344.10" fill="#006464" font-size="8.0" text-anchor="start" font-weight="normal" font-style="normal" font-family='"Liberation Mono", monospace' textLength="23.10" lengthAdjust="spacingAndGlyphs" stroke="#006464" stroke-width="0.3" >RESET</text>
<line x1="87.80" y1="337.50" x2="111.00" y2="337.50" stroke="#006464" stroke-width="1" />
<path d="M71.60,338.60L77.40,344.40M77.40,338.60L71.60,344.40" stroke="#000084" stroke-width="1" fill="none"/>
<line x1="74.00" y1="351.50" x2="84.50" y2="351.50" stroke="#840000" stroke-width="1" />
<text x="79.30" y="350.10" fill="#a90000" font-size="8.0" text-anchor="middle" font-weight="normal" font-style="normal" font-family='"Liberation Mono", monospace' textLength="4.60" lengthAdjust="spacingAndGlyphs" stroke="#a90000" stroke-width="0.3" >3</text>
<text x="87.80" y="354.10" fill="#006464" font-size="8.0" text-anchor="start" font-weight="normal" font-style="normal" font-family='"Liberation Mono", monospace' textLength="23.10" lengthAdjust="spacingAndGlyphs" stroke="#006464" stroke-width="0.3" >RESET</text>
<line x1="87.80" y1="347.50" x2="111.00" y2="347.50" stroke="#006464" stroke-width="1" />
<path d="M71.60,348.60L77.40,354.40M77.40,348.60L71.60,354.40" stroke="#000084" stroke-width="1" fill="none"/>
<line x1="74.00" y1="382.50" x2="84.50" y2="382.50" stroke="#840000" stroke-width="1" />
<text x="79.30" y="381.10" fill="#a90000" font-size="8.0" text-anchor="middle" font-weight="normal" font-style="normal" font-family='"Liberation Mono", monospace' textLength="9.20" lengthAdjust="spacingAndGlyphs" stroke="#a90000" stroke-width="0.3" >18</text>
<text x="87.80" y="385.10" fill="#006464" font-size="8.0" text-anchor="start" font-weight="normal" font-style="normal" font-family='"Liberation Mono", monospace' textLength="19.00" lengthAdjust="spacingAndGlyphs" stroke="#006464" stroke-width="0.3" >AREF</text>
<path d="M71.60,379.60L77.40,385.40M77.40,379.60L71.60,385.40" stroke="#000084" stroke-width="1" fill="none"/>
<line x1="74.00" y1="403.50" x2="84.50" y2="403.50" stroke="#840000" stroke-width="1" />
<text x="79.30" y="402.10" fill="#a90000" font-size="8.0" text-anchor="middle" font-weight="normal" font-style="normal" font-family='"Liberation Mono", monospace' textLength="9.20" lengthAdjust="spacingAndGlyphs" stroke="#a90000" stroke-width="0.3" >19</text>
<text x="87.80" y="406.10" fill="#006464" font-size="8.0" text-anchor="start" font-weight="normal" font-style="normal" font-family='"Liberation Mono", monospace' textLength="9.50" lengthAdjust="spacingAndGlyphs" stroke="#006464" stroke-width="0.3" >A0</text>
<line x1="53.80" y1="403.50" x2="74.00" y2="403.50" stroke="#009600" stroke-width="1" />
<polygon points="30.30,403.5 34.30,398.50 49.80,398.50 53.80,403.5 49.80,408.50 34.30,408.50" stroke="#840000" stroke-width="1" fill="none"/>
<text x="41.25" y="406.70" fill="#840000" font-size="9" text-anchor="middle" font-weight="normal" font-style="normal" font-family='"Liberation Mono", monospace' textLength="10.00" lengthAdjust="spacingAndGlyphs" stroke="#840000" stroke-width="0.3" >A0</text>
<line x1="74.00" y1="413.50" x2="84.50" y2="413.50" stroke="#840000" stroke-width="1" />
<text x="79.30" y="412.10" fill="#a90000" font-size="8.0" text-anchor="middle" font-weight="normal" font-style="normal" font-family='"Liberation Mono", monospace' textLength="9.20" lengthAdjust="spacingAndGlyphs" stroke="#a90000" stroke-width="0.3" >20</text>
<text x="87.80" y="416.10" fill="#006464" font-size="8.0" text-anchor="start" font-weight="normal" font-style="normal" font-family='"Liberation Mono", monospace' textLength="9.50" lengthAdjust="spacingAndGlyphs" stroke="#006464" stroke-width="0.3" >A1</text>
<line x1="53.80" y1="413.50" x2="74.00" y2="413.50" stroke="#009600" stroke-width="1" />
<polygon points="30.30,413.5 34.30,408.50 49.80,408.50 53.80,413.5 49.80,419.50 34.30,419.50" stroke="#840000" stroke-width="1" fill="none"/>
<text x="41.25" y="416.70" fill="#840000" font-size="9" text-anchor="middle" font-weight="normal" font-style="normal" font-family='"Liberation Mono", monospace' textLength="10.00" lengthAdjust="spacingAndGlyphs" stroke="#840000" stroke-width="0.3" >A1</text>
<line x1="74.00" y1="424.50" x2="84.50" y2="424.50" stroke="#840000" stroke-width="1" />
<text x="79.30" y="423.10" fill="#a90000" font-size="8.0" text-anchor="middle" font-weight="normal" font-style="normal" font-family='"Liberation Mono", monospace' textLength="9.20" lengthAdjust="spacingAndGlyphs" stroke="#a90000" stroke-width="0.3" >21</text>
<text x="87.80" y="427.10" fill="#006464" font-size="8.0" text-anchor="start" font-weight="normal" font-style="normal" font-family='"Liberation Mono", monospace' textLength="9.50" lengthAdjust="spacingAndGlyphs" stroke="#006464" stroke-width="0.3" >A2</text>
<line x1="53.80" y1="424.50" x2="74.00" y2="424.50" stroke="#009600" stroke-width="1" />
<polygon points="30.30,424.5 34.30,419.50 49.80,419.50 53.80,424.5 49.80,429.50 34.30,429.50" stroke="#840000" stroke-width="1" fill="none"/>
<text x="41.25" y="427.70" fill="#840000" font-size="9" text-anchor="middle" font-weight="normal" font-style="normal" font-family='"Liberation Mono", monospace' textLength="10.00" lengthAdjust="spacingAndGlyphs" stroke="#840000" stroke-width="0.3" >A2</text>
<line x1="74.00" y1="434.50" x2="84.50" y2="434.50" stroke="#840000" stroke-width="1" />
<text x="79.30" y="433.10" fill="#a90000" font-size="8.0" text-anchor="middle" font-weight="normal" font-style="normal" font-family='"Liberation Mono", monospace' textLength="9.20" lengthAdjust="spacingAndGlyphs" stroke="#a90000" stroke-width="0.3" >22</text>
<text x="87.80" y="437.10" fill="#006464" font-size="8.0" text-anchor="start" font-weight="normal" font-style="normal" font-family='"Liberation Mono", monospace' textLength="9.50" lengthAdjust="spacingAndGlyphs" stroke="#006464" stroke-width="0.3" >A3</text>
<path d="M71.60,431.60L77.40,437.40M77.40,431.60L71.60,437.40" stroke="#000084" stroke-width="1" fill="none"/>
<line x1="74.00" y1="444.50" x2="84.50" y2="444.50" stroke="#840000" stroke-width="1" />
<text x="79.30" y="443.10" fill="#a90000" font-size="8.0" text-anchor="middle" font-weight="normal" font-style="normal" font-family='"Liberation Mono", monospace' textLength="9.20" lengthAdjust="spacingAndGlyphs" stroke="#a90000" stroke-width="0.3" >23</text>
<text x="87.80" y="447.10" fill="#006464" font-size="8.0" text-anchor="start" font-weight="normal" font-style="normal" font-family='"Liberation Mono", monospace' textLength="9.50" lengthAdjust="spacingAndGlyphs" stroke="#006464" stroke-width="0.3" >A4</text>
<line x1="53.80" y1="444.50" x2="74.00" y2="444.50" stroke="#009600" stroke-width="1" />
<polygon points="30.30,444.5 34.30,439.50 49.80,439.50 53.80,444.5 49.80,449.50 34.30,449.50" stroke="#840000" stroke-width="1" fill="none"/>
<text x="41.25" y="447.70" fill="#840000" font-size="9" text-anchor="middle" font-weight="normal" font-style="normal" font-family='"Liberation Mono", monospace' textLength="10.00" lengthAdjust="spacingAndGlyphs" stroke="#840000" stroke-width="0.3" >A4</text>
<line x1="74.00" y1="454.50" x2="84.50" y2="454.50" stroke="#840000" stroke-width="1" />
<text x="79.30" y="453.10" fill="#a90000" font-size="8.0" text-anchor="middle" font-weight="normal" font-style="normal" font-family='"Liberation Mono", monospace' textLength="9.20" lengthAdjust="spacingAndGlyphs" stroke="#a90000" stroke-width="0.3" >24</text>
<text x="87.80" y="457.10" fill="#006464" font-size="8.0" text-anchor="start" font-weight="normal" font-style="normal" font-family='"Liberation Mono", monospace' textLength="9.50" lengthAdjust="spacingAndGlyphs" stroke="#006464" stroke-width="0.3" >A5</text>
<line x1="53.80" y1="454.50" x2="74.00" y2="454.50" stroke="#009600" stroke-width="1" />
<polygon points="30.30,454.5 34.30,449.50 49.80,449.50 53.80,454.5 49.80,459.50 34.30,459.50" stroke="#840000" stroke-width="1" fill="none"/>
<text x="41.25" y="457.70" fill="#840000" font-size="9" text-anchor="middle" font-weight="normal" font-style="normal" font-family='"Liberation Mono", monospace' textLength="10.00" lengthAdjust="spacingAndGlyphs" stroke="#840000" stroke-width="0.3" >A5</text>
<line x1="74.00" y1="464.50" x2="84.50" y2="464.50" stroke="#840000" stroke-width="1" />
<text x="79.30" y="463.10" fill="#a90000" font-size="8.0" text-anchor="middle" font-weight="normal" font-style="normal" font-family='"Liberation Mono", monospace' textLength="9.20" lengthAdjust="spacingAndGlyphs" stroke="#a90000" stroke-width="0.3" >25</text>
<text x="87.80" y="467.10" fill="#006464" font-size="8.0" text-anchor="start" font-weight="normal" font-style="normal" font-family='"Liberation Mono", monospace' textLength="9.50" lengthAdjust="spacingAndGlyphs" stroke="#006464" stroke-width="0.3" >A6</text>
<path d="M71.60,461.60L77.40,467.40M77.40,461.60L71.60,467.40" stroke="#000084" stroke-width="1" fill="none"/>
<line x1="74.00" y1="474.50" x2="84.50" y2="474.50" stroke="#840000" stroke-width="1" />
<text x="79.30" y="473.10" fill="#a90000" font-size="8.0" text-anchor="middle" font-weight="normal" font-style="normal" font-family='"Liberation Mono", monospace' textLength="9.20" lengthAdjust="spacingAndGlyphs" stroke="#a90000" stroke-width="0.3" >26</text>
<text x="87.80" y="477.10" fill="#006464" font-size="8.0" text-anchor="start" font-weight="normal" font-style="normal" font-family='"Liberation Mono", monospace' textLength="9.50" lengthAdjust="spacingAndGlyphs" stroke="#006464" stroke-width="0.3" >A7</text>
<path d="M71.60,471.60L77.40,477.40M77.40,471.60L71.60,477.40" stroke="#000084" stroke-width="1" fill="none"/>
<line x1="166.50" y1="341.50" x2="177.00" y2="341.50" stroke="#840000" stroke-width="1" />
<text x="171.80" y="340.10" fill="#a90000" font-size="8.0" text-anchor="middle" font-weight="normal" font-style="normal" font-family='"Liberation Mono", monospace' textLength="4.60" lengthAdjust="spacingAndGlyphs" stroke="#a90000" stroke-width="0.3" >2</text>
<text x="163.50" y="344.10" fill="#006464" font-size="8.0" text-anchor="end" font-weight="normal" font-style="normal" font-family='"Liberation Mono", monospace' textLength="25.40" lengthAdjust="spacingAndGlyphs" stroke="#006464" stroke-width="0.3" >D0/RX</text>
<path d="M174.60,338.60L180.40,344.40M180.40,338.60L174.60,344.40" stroke="#000084" stroke-width="1" fill="none"/>
<line x1="166.50" y1="351.50" x2="177.00" y2="351.50" stroke="#840000" stroke-width="1" />
<text x="171.80" y="350.10" fill="#a90000" font-size="8.0" text-anchor="middle" font-weight="normal" font-style="normal" font-family='"Liberation Mono", monospace' textLength="4.60" lengthAdjust="spacingAndGlyphs" stroke="#a90000" stroke-width="0.3" >1</text>
<text x="163.50" y="354.10" fill="#006464" font-size="8.0" text-anchor="end" font-weight="normal" font-style="normal" font-family='"Liberation Mono", monospace' textLength="25.40" lengthAdjust="spacingAndGlyphs" stroke="#006464" stroke-width="0.3" >D1/TX</text>
<path d="M174.60,348.60L180.40,354.40M180.40,348.60L174.60,354.40" stroke="#000084" stroke-width="1" fill="none"/>
<line x1="166.50" y1="362.50" x2="177.00" y2="362.50" stroke="#840000" stroke-width="1" />
<text x="171.80" y="361.10" fill="#a90000" font-size="8.0" text-anchor="middle" font-weight="normal" font-style="normal" font-family='"Liberation Mono", monospace' textLength="4.60" lengthAdjust="spacingAndGlyphs" stroke="#a90000" stroke-width="0.3" >5</text>
<text x="163.50" y="365.10" fill="#006464" font-size="8.0" text-anchor="end" font-weight="normal" font-style="normal" font-family='"Liberation Mono", monospace' textLength="9.50" lengthAdjust="spacingAndGlyphs" stroke="#006464" stroke-width="0.3" >D2</text>
<line x1="177.00" y1="362.50" x2="197.60" y2="362.50" stroke="#009600" stroke-width="1" />
<polygon points="197.60,362.5 201.60,357.50 218.60,357.50 222.60,362.5 218.60,367.50 201.60,367.50" stroke="#840000" stroke-width="1" fill="none"/>
<text x="209.30" y="365.70" fill="#840000" font-size="9" text-anchor="middle" font-weight="normal" font-style="normal" font-family='"Liberation Mono", monospace' textLength="10.00" lengthAdjust="spacingAndGlyphs" stroke="#840000" stroke-width="0.3" >D2</text>
<line x1="166.50" y1="372.50" x2="177.00" y2="372.50" stroke="#840000" stroke-width="1" />
<text x="171.80" y="371.10" fill="#a90000" font-size="8.0" text-anchor="middle" font-weight="normal" font-style="normal" font-family='"Liberation Mono", monospace' textLength="4.60" lengthAdjust="spacingAndGlyphs" stroke="#a90000" stroke-width="0.3" >6</text>
<text x="163.50" y="375.10" fill="#006464" font-size="8.0" text-anchor="end" font-weight="normal" font-style="normal" font-family='"Liberation Mono", monospace' textLength="9.50" lengthAdjust="spacingAndGlyphs" stroke="#006464" stroke-width="0.3" >D3</text>
<path d="M174.60,369.60L180.40,375.40M180.40,369.60L174.60,375.40" stroke="#000084" stroke-width="1" fill="none"/>
<line x1="166.50" y1="382.50" x2="177.00" y2="382.50" stroke="#840000" stroke-width="1" />
<text x="171.80" y="381.10" fill="#a90000" font-size="8.0" text-anchor="middle" font-weight="normal" font-style="normal" font-family='"Liberation Mono", monospace' textLength="4.60" lengthAdjust="spacingAndGlyphs" stroke="#a90000" stroke-width="0.3" >7</text>
<text x="163.50" y="385.10" fill="#006464" font-size="8.0" text-anchor="end" font-weight="normal" font-style="normal" font-family='"Liberation Mono", monospace' textLength="9.50" lengthAdjust="spacingAndGlyphs" stroke="#006464" stroke-width="0.3" >D4</text>
<line x1="177.00" y1="382.50" x2="197.60" y2="382.50" stroke="#009600" stroke-width="1" />
<polygon points="197.60,382.5 201.60,377.50 218.60,377.50 222.60,382.5 218.60,388.50 201.60,388.50" stroke="#840000" stroke-width="1" fill="none"/>
<text x="209.30" y="385.70" fill="#840000" font-size="9" text-anchor="middle" font-weight="normal" font-style="normal" font-family='"Liberation Mono", monospace' textLength="10.00" lengthAdjust="spacingAndGlyphs" stroke="#840000" stroke-width="0.3" >D4</text>
<line x1="166.50" y1="393.50" x2="177.00" y2="393.50" stroke="#840000" stroke-width="1" />
<text x="171.80" y="392.10" fill="#a90000" font-size="8.0" text-anchor="middle" font-weight="normal" font-style="normal" font-family='"Liberation Mono", monospace' textLength="4.60" lengthAdjust="spacingAndGlyphs" stroke="#a90000" stroke-width="0.3" >8</text>
<text x="163.50" y="396.10" fill="#006464" font-size="8.0" text-anchor="end" font-weight="normal" font-style="normal" font-family='"Liberation Mono", monospace' textLength="9.50" lengthAdjust="spacingAndGlyphs" stroke="#006464" stroke-width="0.3" >D5</text>
<line x1="177.00" y1="393.50" x2="197.60" y2="393.50" stroke="#009600" stroke-width="1" />
<polygon points="197.60,393.5 201.60,388.50 218.60,388.50 222.60,393.5 218.60,398.50 201.60,398.50" stroke="#840000" stroke-width="1" fill="none"/>
<text x="209.30" y="396.70" fill="#840000" font-size="9" text-anchor="middle" font-weight="normal" font-style="normal" font-family='"Liberation Mono", monospace' textLength="10.00" lengthAdjust="spacingAndGlyphs" stroke="#840000" stroke-width="0.3" >D5</text>
<line x1="166.50" y1="403.50" x2="177.00" y2="403.50" stroke="#840000" stroke-width="1" />
<text x="171.80" y="402.10" fill="#a90000" font-size="8.0" text-anchor="middle" font-weight="normal" font-style="normal" font-family='"Liberation Mono", monospace' textLength="4.60" lengthAdjust="spacingAndGlyphs" stroke="#a90000" stroke-width="0.3" >9</text>
<text x="163.50" y="406.10" fill="#006464" font-size="8.0" text-anchor="end" font-weight="normal" font-style="normal" font-family='"Liberation Mono", monospace' textLength="9.50" lengthAdjust="spacingAndGlyphs" stroke="#006464" stroke-width="0.3" >D6</text>
<path d="M174.60,400.60L180.40,406.40M180.40,400.60L174.60,406.40" stroke="#000084" stroke-width="1" fill="none"/>
<line x1="166.50" y1="413.50" x2="177.00" y2="413.50" stroke="#840000" stroke-width="1" />
<text x="171.80" y="412.10" fill="#a90000" font-size="8.0" text-anchor="middle" font-weight="normal" font-style="normal" font-family='"Liberation Mono", monospace' textLength="9.20" lengthAdjust="spacingAndGlyphs" stroke="#a90000" stroke-width="0.3" >10</text>
<text x="163.50" y="416.10" fill="#006464" font-size="8.0" text-anchor="end" font-weight="normal" font-style="normal" font-family='"Liberation Mono", monospace' textLength="9.50" lengthAdjust="spacingAndGlyphs" stroke="#006464" stroke-width="0.3" >D7</text>
<line x1="177.00" y1="413.50" x2="197.60" y2="413.50" stroke="#009600" stroke-width="1" />
<polygon points="197.60,413.5 201.60,408.50 218.60,408.50 222.60,413.5 218.60,419.50 201.60,419.50" stroke="#840000" stroke-width="1" fill="none"/>
<text x="209.30" y="416.70" fill="#840000" font-size="9" text-anchor="middle" font-weight="normal" font-style="normal" font-family='"Liberation Mono", monospace' textLength="10.00" lengthAdjust="spacingAndGlyphs" stroke="#840000" stroke-width="0.3" >D7</text>
<line x1="166.50" y1="424.50" x2="177.00" y2="424.50" stroke="#840000" stroke-width="1" />
<text x="171.80" y="423.10" fill="#a90000" font-size="8.0" text-anchor="middle" font-weight="normal" font-style="normal" font-family='"Liberation Mono", monospace' textLength="9.20" lengthAdjust="spacingAndGlyphs" stroke="#a90000" stroke-width="0.3" >11</text>
<text x="163.50" y="427.10" fill="#006464" font-size="8.0" text-anchor="end" font-weight="normal" font-style="normal" font-family='"Liberation Mono", monospace' textLength="9.50" lengthAdjust="spacingAndGlyphs" stroke="#006464" stroke-width="0.3" >D8</text>
<line x1="177.00" y1="424.50" x2="197.60" y2="424.50" stroke="#009600" stroke-width="1" />
<polygon points="197.60,424.5 201.60,419.50 218.60,419.50 222.60,424.5 218.60,429.50 201.60,429.50" stroke="#840000" stroke-width="1" fill="none"/>
<text x="209.30" y="427.70" fill="#840000" font-size="9" text-anchor="middle" font-weight="normal" font-style="normal" font-family='"Liberation Mono", monospace' textLength="10.00" lengthAdjust="spacingAndGlyphs" stroke="#840000" stroke-width="0.3" >D8</text>
<line x1="166.50" y1="434.50" x2="177.00" y2="434.50" stroke="#840000" stroke-width="1" />
<text x="171.80" y="433.10" fill="#a90000" font-size="8.0" text-anchor="middle" font-weight="normal" font-style="normal" font-family='"Liberation Mono", monospace' textLength="9.20" lengthAdjust="spacingAndGlyphs" stroke="#a90000" stroke-width="0.3" >12</text>
<text x="163.50" y="437.10" fill="#006464" font-size="8.0" text-anchor="end" font-weight="normal" font-style="normal" font-family='"Liberation Mono", monospace' textLength="9.50" lengthAdjust="spacingAndGlyphs" stroke="#006464" stroke-width="0.3" >D9</text>
<line x1="177.00" y1="434.50" x2="197.60" y2="434.50" stroke="#009600" stroke-width="1" />
<polygon points="197.60,434.5 201.60,429.50 218.60,429.50 222.60,434.5 218.60,439.50 201.60,439.50" stroke="#840000" stroke-width="1" fill="none"/>
<text x="209.30" y="437.70" fill="#840000" font-size="9" text-anchor="middle" font-weight="normal" font-style="normal" font-family='"Liberation Mono", monospace' textLength="10.00" lengthAdjust="spacingAndGlyphs" stroke="#840000" stroke-width="0.3" >D9</text>
<line x1="166.50" y1="444.50" x2="177.00" y2="444.50" stroke="#840000" stroke-width="1" />
<text x="171.80" y="443.10" fill="#a90000" font-size="8.0" text-anchor="middle" font-weight="normal" font-style="normal" font-family='"Liberation Mono", monospace' textLength="9.20" lengthAdjust="spacingAndGlyphs" stroke="#a90000" stroke-width="0.3" >13</text>
<text x="163.50" y="447.10" fill="#006464" font-size="8.0" text-anchor="end" font-weight="normal" font-style="normal" font-family='"Liberation Mono", monospace' textLength="14.00" lengthAdjust="spacingAndGlyphs" stroke="#006464" stroke-width="0.3" >D10</text>
<line x1="177.00" y1="444.50" x2="197.60" y2="444.50" stroke="#009600" stroke-width="1" />
<polygon points="197.60,444.5 201.60,439.50 223.60,439.50 227.60,444.5 223.60,449.50 201.60,449.50" stroke="#840000" stroke-width="1" fill="none"/>
<text x="211.80" y="447.70" fill="#840000" font-size="9" text-anchor="middle" font-weight="normal" font-style="normal" font-family='"Liberation Mono", monospace' textLength="14.00" lengthAdjust="spacingAndGlyphs" stroke="#840000" stroke-width="0.3" >D10</text>
<line x1="166.50" y1="454.50" x2="177.00" y2="454.50" stroke="#840000" stroke-width="1" />
<text x="171.80" y="453.10" fill="#a90000" font-size="8.0" text-anchor="middle" font-weight="normal" font-style="normal" font-family='"Liberation Mono", monospace' textLength="9.20" lengthAdjust="spacingAndGlyphs" stroke="#a90000" stroke-width="0.3" >14</text>
<text x="163.50" y="457.10" fill="#006464" font-size="8.0" text-anchor="end" font-weight="normal" font-style="normal" font-family='"Liberation Mono", monospace' textLength="14.00" lengthAdjust="spacingAndGlyphs" stroke="#006464" stroke-width="0.3" >D11</text>
<line x1="177.00" y1="454.50" x2="197.60" y2="454.50" stroke="#009600" stroke-width="1" />
<polygon points="197.60,454.5 201.60,449.50 223.60,449.50 227.60,454.5 223.60,460.50 201.60,460.50" stroke="#840000" stroke-width="1" fill="none"/>
<text x="211.80" y="457.70" fill="#840000" font-size="9" text-anchor="middle" font-weight="normal" font-style="normal" font-family='"Liberation Mono", monospace' textLength="14.00" lengthAdjust="spacingAndGlyphs" stroke="#840000" stroke-width="0.3" >D11</text>
<line x1="166.50" y1="465.50" x2="177.00" y2="465.50" stroke="#840000" stroke-width="1" />
<text x="171.80" y="464.10" fill="#a90000" font-size="8.0" text-anchor="middle" font-weight="normal" font-style="normal" font-family='"Liberation Mono", monospace' textLength="9.20" lengthAdjust="spacingAndGlyphs" stroke="#a90000" stroke-width="0.3" >15</text>
<text x="163.50" y="468.10" fill="#006464" font-size="8.0" text-anchor="end" font-weight="normal" font-style="normal" font-family='"Liberation Mono", monospace' textLength="14.00" lengthAdjust="spacingAndGlyphs" stroke="#006464" stroke-width="0.3" >D12</text>
<line x1="177.00" y1="465.50" x2="197.60" y2="465.50" stroke="#009600" stroke-width="1" />
<polygon points="197.60,465.5 201.60,460.50 223.60,460.50 227.60,465.5 223.60,470.50 201.60,470.50" stroke="#840000" stroke-width="1" fill="none"/>
<text x="211.80" y="468.70" fill="#840000" font-size="9" text-anchor="middle" font-weight="normal" font-style="normal" font-family='"Liberation Mono", monospace' textLength="14.00" lengthAdjust="spacingAndGlyphs" stroke="#840000" stroke-width="0.3" >D12</text>
<line x1="166.50" y1="475.50" x2="177.00" y2="475.50" stroke="#840000" stroke-width="1" />
<text x="171.80" y="474.10" fill="#a90000" font-size="8.0" text-anchor="middle" font-weight="normal" font-style="normal" font-family='"Liberation Mono", monospace' textLength="9.20" lengthAdjust="spacingAndGlyphs" stroke="#a90000" stroke-width="0.3" >16</text>
<text x="163.50" y="478.10" fill="#006464" font-size="8.0" text-anchor="end" font-weight="normal" font-style="normal" font-family='"Liberation Mono", monospace' textLength="14.00" lengthAdjust="spacingAndGlyphs" stroke="#006464" stroke-width="0.3" >D13</text>
<path d="M174.60,472.60L180.40,478.40M180.40,472.60L174.60,478.40" stroke="#000084" stroke-width="1" fill="none"/>
<line x1="115.50" y1="496.50" x2="115.50" y2="506.00" stroke="#840000" stroke-width="1" />
<line x1="125.50" y1="496.50" x2="125.50" y2="506.00" stroke="#840000" stroke-width="1" />
<text x="113.20" y="506.00" fill="#a90000" font-size="8.0" text-anchor="start" font-weight="normal" font-style="normal" font-family='"Liberation Mono", monospace' textLength="7.50" lengthAdjust="spacingAndGlyphs" transform="rotate(-90 113.20 506.00)" stroke="#a90000" stroke-width="0.3" >29</text>
<text x="123.50" y="503.00" fill="#a90000" font-size="8.0" text-anchor="start" font-weight="normal" font-style="normal" font-family='"Liberation Mono", monospace' textLength="3.80" lengthAdjust="spacingAndGlyphs" transform="rotate(-90 123.50 503.00)" stroke="#a90000" stroke-width="0.3" >4</text>
<text x="118.20" y="492.30" fill="#006464" font-size="8.0" text-anchor="start" font-weight="normal" font-style="normal" font-family='"Liberation Mono", monospace' textLength="14.70" lengthAdjust="spacingAndGlyphs" transform="rotate(-90 118.20 492.30)" stroke="#006464" stroke-width="0.3" >GND</text>
<text x="128.20" y="492.30" fill="#006464" font-size="8.0" text-anchor="start" font-weight="normal" font-style="normal" font-family='"Liberation Mono", monospace' textLength="14.70" lengthAdjust="spacingAndGlyphs" transform="rotate(-90 128.20 492.30)" stroke="#006464" stroke-width="0.3" >GND</text>
<path d="M112.60,503.60L118.40,509.40M118.40,503.60L112.60,509.40" stroke="#000084" stroke-width="1" fill="none"/>
<polyline points="125.50,506.50 125.50,521.50 58.50,521.50" stroke="#009600" stroke-width="1" fill="none" stroke-linejoin="miter" />
<circle cx="84.50" cy="521.50" r="1.9" fill="#009600"/>
<line x1="84.50" y1="521.50" x2="84.50" y2="562.00" stroke="#009600" stroke-width="1" />
<path d="M84.5,562.00V566.80M79.20,566.80H89.80L84.5,572.30Z" stroke="#840000" stroke-width="1" fill="none" stroke-linejoin="miter"/>
<text x="84.50" y="586.20" fill="#006464" font-size="8.0" text-anchor="middle" font-weight="normal" font-style="normal" font-family='"Liberation Mono", monospace' textLength="14.50" lengthAdjust="spacingAndGlyphs" stroke="#006464" stroke-width="0.3" >GND</text>
<polygon points="33.5,516.5 55.2,516.5 58.6,521.5 55.2,526.5 33.5,526.5" stroke="#840000" stroke-width="1" fill="none"/>
<text x="45.00" y="524.70" fill="#840000" font-size="9" text-anchor="middle" font-weight="normal" font-style="normal" font-family='"Liberation Mono", monospace' textLength="14.20" lengthAdjust="spacingAndGlyphs" stroke="#840000" stroke-width="0.3" >GND</text>
<text x="139.00" y="509.00" fill="#006464" font-size="8.0" text-anchor="start" font-weight="normal" font-style="normal" font-family='"Liberation Mono", monospace' textLength="9.50" lengthAdjust="spacingAndGlyphs" stroke="#006464" stroke-width="0.3" >A1</text>
<text x="139.00" y="519.30" fill="#006464" font-size="8.0" text-anchor="start" font-weight="normal" font-style="normal" font-family='"Liberation Mono", monospace' textLength="70.90" lengthAdjust="spacingAndGlyphs" stroke="#006464" stroke-width="0.3" >Arduino_Nano_v3.x</text>
<text x="24.60" y="623.70" fill="#0000c2" font-size="8.8" text-anchor="start" font-weight="normal" font-style="normal" font-family='"Liberation Mono", monospace' textLength="53.50" lengthAdjust="spacingAndGlyphs" stroke="#0000c2" stroke-width="0.3" >Requerements</text>
<text x="85.60" y="631.70" fill="#0000c2" font-size="8.8" text-anchor="start" font-weight="normal" font-style="normal" font-family='"Liberation Mono", monospace' textLength="13.40" lengthAdjust="spacingAndGlyphs" stroke="#0000c2" stroke-width="0.3" >VCC</text>
<text x="24.60" y="648.30" fill="#0000c2" font-size="8.8" text-anchor="start" font-weight="normal" font-style="normal" font-family='"Liberation Mono", monospace' textLength="45.60" lengthAdjust="spacingAndGlyphs" stroke="#0000c2" stroke-width="0.3" >1. USB (5v)</text>
<text x="24.60" y="656.90" fill="#0000c2" font-size="8.8" text-anchor="start" font-weight="normal" font-style="normal" font-family='"Liberation Mono", monospace' textLength="134.70" lengthAdjust="spacingAndGlyphs" stroke="#0000c2" stroke-width="0.3" >2. Voltage regulator (5v -&gt; 3.3v)</text>
<text x="77.00" y="673.30" fill="#0000c2" font-size="8.8" text-anchor="start" font-weight="normal" font-style="normal" font-family='"Liberation Mono", monospace' textLength="33.10" lengthAdjust="spacingAndGlyphs" stroke="#0000c2" stroke-width="0.3" >Interface</text>
<text x="24.60" y="690.00" fill="#0000c2" font-size="8.8" text-anchor="start" font-weight="normal" font-style="normal" font-family='"Liberation Mono", monospace' textLength="27.00" lengthAdjust="spacingAndGlyphs" stroke="#0000c2" stroke-width="0.3" >[Input]</text>
<text x="24.60" y="698.60" fill="#0000c2" font-size="8.8" text-anchor="start" font-weight="normal" font-style="normal" font-family='"Liberation Mono", monospace' textLength="53.00" lengthAdjust="spacingAndGlyphs" stroke="#0000c2" stroke-width="0.3" >1. Buttons 6x</text>
<text x="24.60" y="714.60" fill="#0000c2" font-size="8.8" text-anchor="start" font-weight="normal" font-style="normal" font-family='"Liberation Mono", monospace' textLength="27.00" lengthAdjust="spacingAndGlyphs" stroke="#0000c2" stroke-width="0.3" >[Logic]</text>
<text x="24.60" y="723.20" fill="#0000c2" font-size="8.8" text-anchor="start" font-weight="normal" font-style="normal" font-family='"Liberation Mono", monospace' textLength="128.90" lengthAdjust="spacingAndGlyphs" stroke="#0000c2" stroke-width="0.3" >1.Atmega328p (Arduino nano v3)</text>
<text x="24.60" y="739.20" fill="#0000c2" font-size="8.8" text-anchor="start" font-weight="normal" font-style="normal" font-family='"Liberation Mono", monospace' textLength="32.00" lengthAdjust="spacingAndGlyphs" stroke="#0000c2" stroke-width="0.3" >[Output]</text>
<text x="24.60" y="747.70" fill="#0000c2" font-size="8.8" text-anchor="start" font-weight="normal" font-style="normal" font-family='"Liberation Mono", monospace' textLength="77.00" lengthAdjust="spacingAndGlyphs" stroke="#0000c2" stroke-width="0.3" >1. Display SSD1306</text>
<text x="24.60" y="756.30" fill="#0000c2" font-size="8.8" text-anchor="start" font-weight="normal" font-style="normal" font-family='"Liberation Mono", monospace' textLength="83.40" lengthAdjust="spacingAndGlyphs" stroke="#0000c2" stroke-width="0.3" >2. LEDs 2x, R(1K) 2x</text>
<line x1="25" y1="637.5" x2="215" y2="637.5" stroke="#0000c2" stroke-width="1" stroke-dasharray="3.5 1.6"/>
<line x1="25" y1="679.5" x2="215" y2="679.5" stroke="#0000c2" stroke-width="1" stroke-dasharray="3.5 1.6"/>
<rect x="884.5" y="618.5" width="230" height="62" fill="#000000"/>
<rect x="677.5" y="618.5" width="437" height="144" fill="none" stroke="#840000" stroke-width="1"/>
<line x1="677.50" y1="642.50" x2="884.50" y2="642.50" stroke="#840000" stroke-width="1" />
<line x1="677.50" y1="657.50" x2="884.50" y2="657.50" stroke="#840000" stroke-width="1" />
<line x1="677.50" y1="680.50" x2="884.50" y2="680.50" stroke="#840000" stroke-width="1" />
<line x1="884.50" y1="618.50" x2="884.50" y2="680.50" stroke="#840000" stroke-width="1" />
<line x1="884.50" y1="680.50" x2="1114.50" y2="680.50" stroke="#840000" stroke-width="1" />
<line x1="677.50" y1="705.50" x2="1114.50" y2="705.50" stroke="#840000" stroke-width="1" />
<line x1="677.50" y1="721.50" x2="1114.50" y2="721.50" stroke="#840000" stroke-width="1" />
<line x1="677.50" y1="733.50" x2="1114.50" y2="733.50" stroke="#840000" stroke-width="1" />
<line x1="677.50" y1="747.50" x2="1114.50" y2="747.50" stroke="#840000" stroke-width="1" />
<line x1="758.50" y1="721.50" x2="758.50" y2="733.50" stroke="#840000" stroke-width="1" />
<line x1="801.50" y1="733.50" x2="801.50" y2="747.50" stroke="#840000" stroke-width="1" />
<line x1="1017.50" y1="721.50" x2="1017.50" y2="747.50" stroke="#840000" stroke-width="1" />
<text x="681.40" y="628.20" fill="#840000" font-size="10.2" text-anchor="start" font-weight="normal" font-style="normal" font-family='"Liberation Mono", monospace' textLength="123.30" lengthAdjust="spacingAndGlyphs" stroke="#840000" stroke-width="0.15" >PROJECT: Hacker's Devices</text>
<text x="681.40" y="639.00" fill="#840000" font-size="10.2" text-anchor="start" font-weight="normal" font-style="normal" font-family='"Liberation Mono", monospace' textLength="194.80" lengthAdjust="spacingAndGlyphs" stroke="#840000" stroke-width="0.15" >USAGE: Password manager, BadUSB, Auto.</text>
<text x="681.40" y="653.90" fill="#840000" font-size="10.2" text-anchor="start" font-weight="normal" font-style="normal" font-family='"Liberation Mono", monospace' textLength="85.00" lengthAdjust="spacingAndGlyphs" stroke="#840000" stroke-width="0.15" >VERSION_CODE: 1v</text>
<text x="681.40" y="667.20" fill="#840000" font-size="10.2" text-anchor="start" font-weight="normal" font-style="normal" font-family='"Liberation Mono", monospace' textLength="162.60" lengthAdjust="spacingAndGlyphs" stroke="#840000" stroke-width="0.15" >INFO: Device charged by PC's USB.</text>
<text x="709.40" y="677.00" fill="#840000" font-size="10.2" text-anchor="start" font-weight="normal" font-style="normal" font-family='"Liberation Mono", monospace' textLength="165.70" lengthAdjust="spacingAndGlyphs" stroke="#840000" stroke-width="0.15" >5V converts into 3.3V for DATA BUS</text>
<text x="682.80" y="690.40" fill="#840000" font-size="10.2" text-anchor="start" font-weight="normal" font-style="normal" font-family='"Liberation Mono", monospace' textLength="33.00" lengthAdjust="spacingAndGlyphs" stroke="#840000" stroke-width="0.15" >Sheet: /</text>
<text x="682.80" y="701.00" fill="#840000" font-size="10.2" text-anchor="start" font-weight="normal" font-style="normal" font-family='"Liberation Mono", monospace' textLength="116.70" lengthAdjust="spacingAndGlyphs" stroke="#840000" stroke-width="0.15" >File: SpeedJeck.kicad_sch</text>
<text x="682.80" y="731.20" fill="#840000" font-size="10.2" text-anchor="start" font-weight="normal" font-style="normal" font-family='"Liberation Mono", monospace' textLength="36.30" lengthAdjust="spacingAndGlyphs" stroke="#840000" stroke-width="0.15" >Size: A4</text>
<text x="771.50" y="731.20" fill="#840000" font-size="10.2" text-anchor="start" font-weight="normal" font-style="normal" font-family='"Liberation Mono", monospace' textLength="88.70" lengthAdjust="spacingAndGlyphs" stroke="#840000" stroke-width="0.15" >Date: 2026-02-18</text>
<text x="682.80" y="743.50" fill="#840000" font-size="10.2" text-anchor="start" font-weight="normal" font-style="normal" font-family='"Liberation Mono", monospace' textLength="82.50" lengthAdjust="spacingAndGlyphs" stroke="#840000" stroke-width="0.15" >KiCad E.D.A. 9.0.6</text>
<text x="810.50" y="744.70" fill="#840000" font-size="10.2" text-anchor="start" font-weight="normal" font-style="normal" font-family='"Liberation Mono", monospace' textLength="83.60" lengthAdjust="spacingAndGlyphs" stroke="#840000" stroke-width="0.15" >Designed by Sinus</text>
<text x="683.50" y="758.80" fill="#840000" font-size="10.2" text-anchor="start" font-weight="normal" font-style="normal" font-family='"Liberation Mono", monospace' textLength="300.70" lengthAdjust="spacingAndGlyphs" stroke="#840000" stroke-width="0.15" >URL: https://gittea.dev/SocioCybereeng/PCBs/SpeedJeck-v1.git</text>
<text x="1026.50" y="731.10" fill="#840000" font-size="10.2" text-anchor="start" font-weight="normal" font-style="normal" font-family='"Liberation Mono", monospace' textLength="28.20" lengthAdjust="spacingAndGlyphs" stroke="#840000" stroke-width="0.15" >Rev: 1</text>
<text x="1026.50" y="743.50" fill="#840000" font-size="10.2" text-anchor="start" font-weight="normal" font-style="normal" font-family='"Liberation Mono", monospace' textLength="32.60" lengthAdjust="spacingAndGlyphs" stroke="#840000" stroke-width="0.15" >Id: 1/1</text>
<text x="683.50" y="716.70" fill="#840000" font-size="12" text-anchor="start" font-weight="bold" font-style="italic" font-family='"Liberation Mono", monospace' textLength="97.80" lengthAdjust="spacingAndGlyphs" stroke="#840000" stroke-width="0.4" >Title: SpeedJeck</text>
<polygon points="907.7,629.4 925.6,632.3 929.9,636.5 929.9,654.5 913.1,667.9 897.1,665.3 892.6,660.8 892.6,642.5" fill="#dcdff0"/>
<polygon points="913.1,634 921.1,634 921.1,647.1 924.5,650 910.2,662.5 897.1,660.2 897.1,647.7" fill="#000000"/>
<polygon points="893.7,640.8 906.8,630.3 910.2,632.8 896,644.8" fill="#a9c7f0"/>
<polygon points="921.1,632.8 924.5,636.3 924.5,650 921.1,647.1" fill="#a9c7f0"/>
<polygon points="924.5,636.3 926.4,637.3 926.4,651.6 924.5,650" fill="#4a4f60"/>
<polygon points="894.3,656.2 906.8,657.9 910.2,662.5 897.1,660.2" fill="#a9c7f0"/>
<line x1="897.5" y1="660.6" x2="909.5" y2="662.8" stroke="#3a3f50" stroke-width="0.8"/>
<text x="943.00" y="637.80" fill="#b9b9b9" font-size="8" text-anchor="start" font-weight="normal" font-style="normal" font-family='"Liberation Mono", monospace' textLength="105.70" lengthAdjust="spacingAndGlyphs" >The Future technologes</text>
<text x="943.00" y="656.20" fill="#e4e4ea" font-size="17" text-anchor="start" font-weight="bold" font-style="normal" font-family='"Liberation Mono", monospace' textLength="162.60" lengthAdjust="spacingAndGlyphs" >SOCIO-CYBEREENG</text>
<text x="1049.00" y="667.00" fill="#dcdcdc" font-size="7.2" text-anchor="start" font-weight="bold" font-style="normal" font-family='"Liberation Mono", monospace' textLength="56.00" lengthAdjust="spacingAndGlyphs" >Micro-Systems</text>
<circle cx="1084" cy="635.7" r="2.6" fill="none" stroke="#8fb4ee" stroke-width="1.1"/>
<circle cx="1093.6" cy="635.7" r="2.6" fill="none" stroke="#8fb4ee" stroke-width="1.1"/>
<circle cx="1102.8" cy="635.7" r="2.6" fill="none" stroke="#8fb4ee" stroke-width="1.1"/>
<circle cx="1022.8" cy="664.2" r="2.6" fill="none" stroke="#8fb4ee" stroke-width="1.1"/>
<circle cx="1032.4" cy="664.2" r="2.6" fill="none" stroke="#8fb4ee" stroke-width="1.1"/>
<circle cx="1041.8" cy="664.2" r="2.6" fill="none" stroke="#8fb4ee" stroke-width="1.1"/>
</svg>
</body></html>
